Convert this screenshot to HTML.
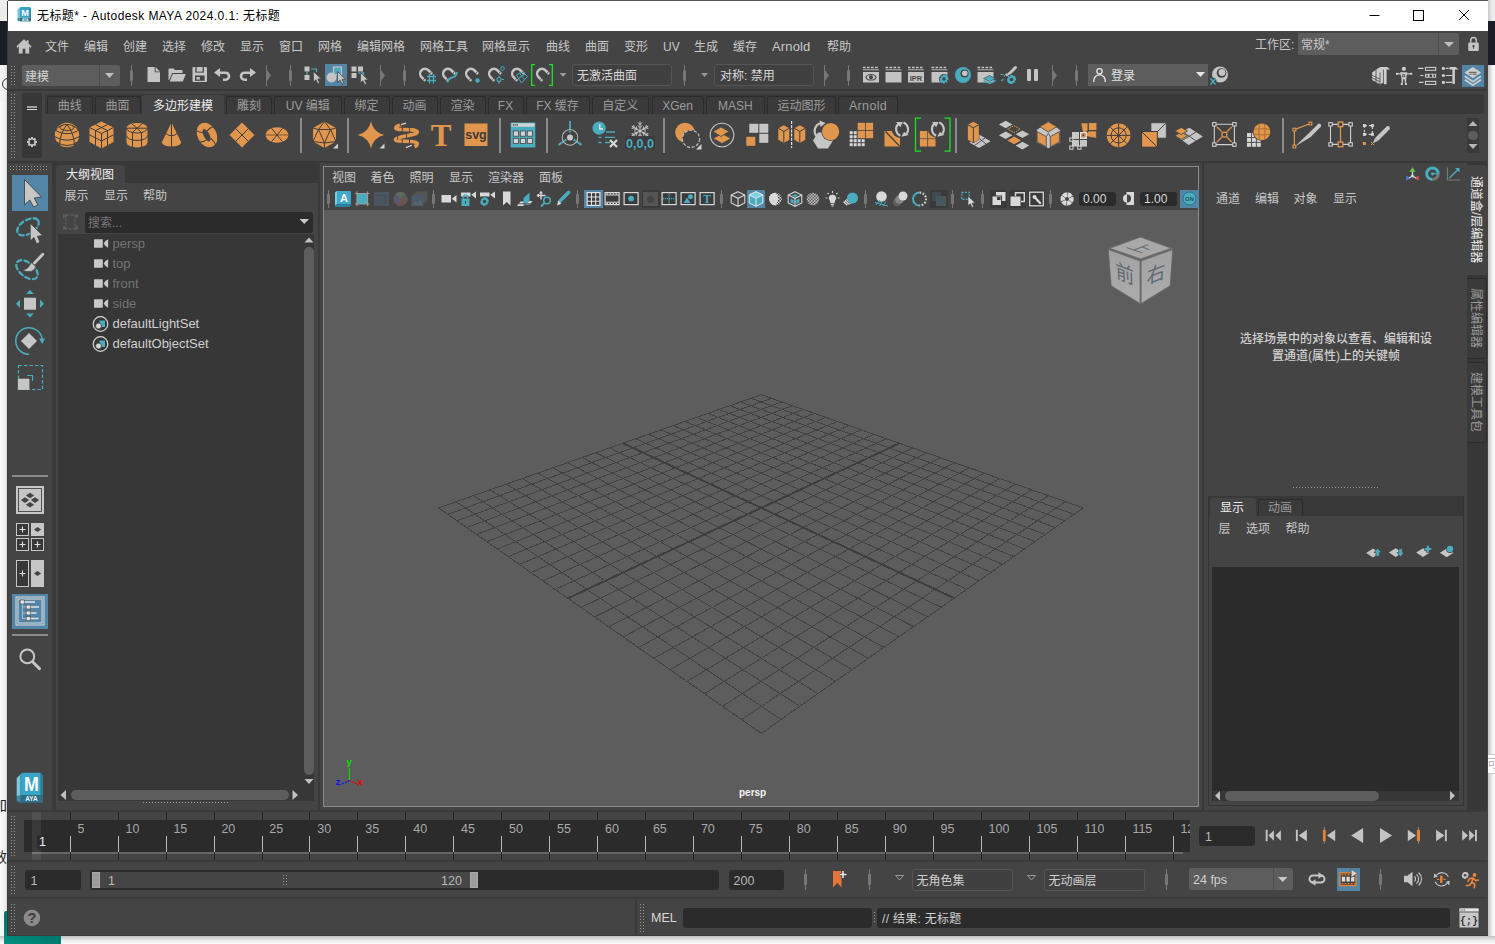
<!DOCTYPE html>
<html lang="zh-CN"><head><meta charset="utf-8"><title>Maya</title>
<style>
*{box-sizing:border-box;margin:0;padding:0}
html,body{width:1495px;height:944px;overflow:hidden;background:#fff}
body{position:relative;font-family:"Liberation Sans","Noto Sans CJK SC",sans-serif;font-size:12px;color:#c8c8c8;line-height:1}
.a{position:absolute}
.t{position:absolute;white-space:nowrap;line-height:16px;height:16px}
.win{position:absolute;left:8px;top:1px;width:1480px;height:935px;background:#444}
.dots{position:absolute;background-image:radial-gradient(circle,#7a7a7a 0.6px,transparent 0.9px);background-size:3px 3px}
.dk{background:#2b2b2b}
.md{background:#373737}
.cb{position:absolute;background:#5d5d5d;border-radius:2px}
.fld{position:absolute;background:#2b2b2b;border-radius:2px}
svg{position:absolute;overflow:visible}
.tab{position:absolute;border:1px solid #2b2b2b;border-bottom:none;border-radius:3px 3px 0 0;background:#3a3a3a;color:#9c9c9c;text-align:center;line-height:19px;height:18px;top:96px;font-size:12px}
.tab.on{background:#444;border-color:#444;color:#eee;top:95px;height:19px;line-height:21px}
</style></head><body>

<svg width="0" height="0" style="left:0;top:0"><defs><pattern id="dp" width="3" height="3" patternUnits="userSpaceOnUse"><rect width="1" height="1" fill="#969696"/></pattern><pattern id="dp2" width="2.5" height="3" patternUnits="userSpaceOnUse"><rect width="1" height="1" fill="#808080"/></pattern></defs></svg>
<div class="a" style="left:0px;top:0px;width:8px;height:21px;background:#ececec;"></div><div class="a" style="left:0px;top:21px;width:8px;height:43.5px;background:#1c1e27;"></div><div class="a" style="left:0px;top:64.5px;width:8px;height:37.5px;background:linear-gradient(90deg,#f4f4f4 0,#f0f0f0 55%,#d4d4d4 100%);"></div><div class="a" style="left:0px;top:102px;width:8px;height:842px;background:linear-gradient(90deg,#fafafa 0,#f2f2f2 50%,#d6d6d6 100%);"></div><div class="a" style="left:1.500px;top:78px;width:12px;height:12px;border:1px solid #333;border-radius:50%"></div><div class="a" style="left:1488px;top:0px;width:7px;height:21px;background:linear-gradient(90deg,#c8c8c8 0,#ececec 60%);"></div><div class="a" style="left:1488px;top:21px;width:7px;height:43.5px;background:#1c1e27;"></div><div class="a" style="left:1488px;top:64.5px;width:7px;height:880px;background:linear-gradient(90deg,#c4c4c4 0,#f6f6f6 70%,#fafafa 100%);"></div><div class="a" style="left:0px;top:936px;width:1495px;height:8px;background:linear-gradient(180deg,#c2c2c2 0,#eee 60%,#fafafa 100%);"></div><div class="a" style="left:4px;top:911px;width:57px;height:33px;background:linear-gradient(20deg,#009080 0,#007a6c 45%);border-radius:2px 0 0 0"></div><div class="a" style="left:8px;top:0px;width:1480px;height:1px;background:#555;"></div><div class="a" style="left:7px;top:1px;width:1px;height:935px;background:#3a3a3a;"></div><div class="a" style="left:1487px;top:1px;width:1px;height:935px;background:#3a3a3a;"></div><div class="a" style="left:0;top:797px;width:7px;height:18px;overflow:hidden"><div class="t" style="left:-7px;top:0;color:#222;font-size:14px">加</div></div><div class="a" style="left:0;top:849px;width:7px;height:18px;overflow:hidden"><div class="t" style="left:-7px;top:0;color:#222;font-size:14px">效</div></div><div class="a" style="left:1488px;top:754px;width:7px;height:20px;overflow:hidden;background:#fff;border-top:1px solid #c8c8c8;border-bottom:1px solid #c8c8c8"><div class="t" style="left:-1px;top:1px;color:#b4b4b4;font-size:12px">可</div></div>
<div class="win">
<div class="a" style="left:-8px;top:-1px;width:1495px;height:944px">
<div class="a" style="left:8px;top:1px;width:1480px;height:30px;background:#fff;"></div><svg style="left:16px;top:6px" width="16" height="16" ><g transform="translate(0.5 0.5) scale(0.9688 0.9688) translate(-0.0 -0.0)"><path d="M1 3.2L3 1.5v11.3L1 12z" fill="#7cc7dc"/><path d="M3 1.5l1-.9h9.6l1.2 1.2v9.9H3z" fill="#37a5c5"/><path d="M13.6.6l1.2 1.2v13.6l-1.2-1z" fill="#2a7f9c"/><path d="M3 11.7h11.8v3.7H3z" fill="#2d6f88"/><path d="M1 12l2-.3v3.7l-2-1z" fill="#3c8aa5"/><text x="8.9" y="9.6" font-family="Liberation Sans,sans-serif" font-weight="bold" font-size="9.5" fill="#fff" text-anchor="middle">M</text><text x="8.9" y="14.7" font-family="Liberation Sans,sans-serif" font-weight="bold" font-size="3.4" fill="#e8f4f8" text-anchor="middle">AYA</text></g></svg><div class="t" style="left:37px;top:8.0px;color:#000;font-size:12px;letter-spacing:0.42px">无标题* - Autodesk MAYA 2024.0.1: 无标题</div><svg style="left:1360px;top:1px" width="128" height="30" viewBox="0 0 128 30" fill="none" stroke="#000" stroke-width="1"><path d="M9.5 14.5h10"/><rect x="53.5" y="9.5" width="10" height="10"/><path d="M99 9l10 10M109 9l-10 10"/></svg>
<svg style="left:16px;top:38px" width="16" height="16" ><g transform="translate(0 0.8) scale(1.0667 1.0571) translate(-0.0 -0.0)"><path d="M7.5 0.5L0.3 7.3l1.1 1.2L2.6 7.4V14h3.6V9.3h2.6V14h3.6V7.4l1.2 1.1 1.1-1.2L11.8 4.600V1.3H9.9v1.5z" fill="#c4c4c4"/></g></svg><div class="t" style="left:45px;top:39.3px;font-size:12px">文件</div><div class="t" style="left:84px;top:39.3px;font-size:12px">编辑</div><div class="t" style="left:123px;top:39.3px;font-size:12px">创建</div><div class="t" style="left:162px;top:39.3px;font-size:12px">选择</div><div class="t" style="left:201px;top:39.3px;font-size:12px">修改</div><div class="t" style="left:240px;top:39.3px;font-size:12px">显示</div><div class="t" style="left:279px;top:39.3px;font-size:12px">窗口</div><div class="t" style="left:318px;top:39.3px;font-size:12px">网格</div><div class="t" style="left:357px;top:39.3px;font-size:12px">编辑网格</div><div class="t" style="left:420px;top:39.3px;font-size:12px">网格工具</div><div class="t" style="left:482px;top:39.3px;font-size:12px">网格显示</div><div class="t" style="left:546px;top:39.3px;font-size:12px">曲线</div><div class="t" style="left:585px;top:39.3px;font-size:12px">曲面</div><div class="t" style="left:624px;top:39.3px;font-size:12px">变形</div><div class="t" style="left:663px;top:39.3px;font-size:12px">UV</div><div class="t" style="left:694px;top:39.3px;font-size:12px">生成</div><div class="t" style="left:733px;top:39.3px;font-size:12px">缓存</div><div class="t" style="left:772px;top:39.3px;font-size:12px;font-size:13px;letter-spacing:0.15px">Arnold</div><div class="t" style="left:827px;top:39.3px;font-size:12px">帮助</div><div class="t" style="left:1255px;top:37.3px;font-size:12px">工作区:</div><div class="cb" style="left:1298px;top:33px;width:161px;height:21.500px"></div><div class="a" style="left:1438px;top:33px;width:1px;height:21.5px;background:#4e4e4e;"></div><div class="t" style="left:1301px;top:37.3px;font-size:12px">常规*</div><svg style="left:1444px;top:42px" width="10" height="5" ><path d="M0 0h10l-5.0 5z" fill="#c0c0c0"/></svg><svg style="left:1467px;top:36px" width="13" height="16" ><g transform="translate(0.5 0) scale(0.9231 0.9412) translate(-0.0 -0.0)"><path d="M3.5 7V4.6a3 3 0 0 1 6 0V7" fill="none" stroke="#c4c4c4" stroke-width="1.6"/><rect x="0.8" y="7" width="11.4" height="9" rx="1" fill="#c4c4c4"/><circle cx="6.5" cy="10.8" r="1.2" fill="#444"/><rect x="6" y="11" width="1" height="2.6" fill="#444"/></g></svg>
<svg style="left:11px;top:66px" width="6" height="21"><rect width="6" height="21" fill="url(#dp)"/></svg><div class="cb" style="left:22px;top:65px;width:98px;height:21px"></div><div class="a" style="left:99px;top:65px;width:1px;height:21px;background:#4e4e4e;"></div><div class="t" style="left:25px;top:69.3px;font-size:12px;color:#d0d0d0">建模</div><svg style="left:105px;top:73px" width="9" height="5" ><path d="M0 0h9l-4.5 5z" fill="#c0c0c0"/></svg><div class="a" style="left:131.0px;top:65px;width:1px;height:21px;background:#777;"></div><div class="a" style="left:130.0px;top:70px;width:3px;height:11px;background:#777;border-radius:1px"></div><svg style="left:147px;top:67px" width="13" height="15" ><path d="M0.5 0h7.2v5.3H13V15H0.5z" fill="#c4c4c4"/><path d="M8.6 0l4.4 4.4H8.6z" fill="#c4c4c4"/></svg><svg style="left:168px;top:67px" width="18" height="15" ><path d="M0.5 13V2.5q0-1 1-1h4l1.5 1.6h6.5q1 0 1 1V6H4.2L1.2 13z" fill="#c4c4c4"/><path d="M4.8 7h13l-3 7.5H1.6z" fill="#c4c4c4"/></svg><svg style="left:192px;top:67px" width="15" height="15" ><path d="M1.5 0H14q1 0 1 1v13q0 1-1 1H1.500Q0.500 15 0.500 14V1q0-1 1-1z" fill="#c4c4c4"/><rect x="3.3" y="0" width="8.6" height="5.600" fill="#444"/><rect x="4.600" y="0" width="6" height="4.600" fill="#c4c4c4"/><rect x="3" y="8.500" width="9.600" height="5.300" fill="#444"/><rect x="4.500" y="10" width="3.300" height="2.600" fill="#c4c4c4"/></svg><svg style="left:214px;top:68px" width="18" height="13" ><path d="M6 0L0 4.500l6 4.500V6h5.500a2.200 2.200 0 0 1 0 4.400H9v2.600h2.500a4.800 4.800 0 0 0 0-9.600H6z" fill="#c4c4c4"/></svg><svg style="left:238px;top:68px" width="18" height="13" ><path d="M12 0l6 4.500-6 4.500V6H6.500a2.200 2.200 0 0 0 0 4.400H9v2.600H6.500a4.800 4.800 0 0 1 0-9.600H12z" fill="#c4c4c4"/></svg><div class="a" style="left:266.0px;top:65px;width:1px;height:21px;background:#777;"></div><svg style="left:267px;top:70px" width="4" height="11" ><path d="M0 0v11l4 -5.5z" fill="#777"/></svg><div class="a" style="left:290.0px;top:65px;width:1px;height:21px;background:#777;"></div><div class="a" style="left:289.0px;top:70px;width:3px;height:11px;background:#777;border-radius:1px"></div><svg style="left:304px;top:66px" width="18" height="19" ><rect x="0.500" y="0.500" width="5" height="5" fill="#c4c4c4"/><rect x="0.500" y="9" width="5" height="5" fill="#c4c4c4"/><path d="M3 5.500v3.500M7 3h5.500v3" fill="none" stroke="#4aacbf" stroke-width="1.200"/><path transform="translate(9.5 5.5) scale(0.9)" d="M0 0v11.500l2.800-2.300 1.900 4.300 2-0.900-1.900-4.200 3.700-0.300z" fill="#c4c4c4" stroke="#444" stroke-width="0.800"/></svg><div class="a" style="left:325px;top:64px;width:22px;height:22px;background:#5285a6;"></div><svg style="left:326px;top:66px" width="20" height="19" ><rect x="7.500" y="1" width="8" height="8" fill="#4aacbf" stroke="#c4c4c4" stroke-width="1.200"/><circle cx="5.500" cy="11.500" r="5" fill="#c4c4c4"/><path transform="translate(11.5 5.5) scale(0.95)" d="M0 0v11.500l2.800-2.300 1.900 4.300 2-0.900-1.900-4.200 3.700-0.300z" fill="#c4c4c4" stroke="#444" stroke-width="0.800"/></svg><svg style="left:351px;top:66px" width="18" height="19" ><rect x="0.500" y="0.500" width="5" height="5" fill="#c4c4c4"/><rect x="7" y="0.500" width="5" height="5" fill="#c4c4c4"/><rect x="0.500" y="7" width="5" height="5" fill="#c4c4c4"/><path d="M7.500 7h5v4" fill="none" stroke="#4aacbf" stroke-width="1.400"/><path transform="translate(9.5 6.5) scale(0.9)" d="M0 0v11.500l2.800-2.300 1.900 4.300 2-0.900-1.900-4.200 3.700-0.300z" fill="#c4c4c4" stroke="#444" stroke-width="0.800"/></svg><div class="a" style="left:380.0px;top:65px;width:1px;height:21px;background:#777;"></div><svg style="left:381px;top:70px" width="4" height="11" ><path d="M0 0v11l4 -5.5z" fill="#777"/></svg><div class="a" style="left:404.0px;top:65px;width:1px;height:21px;background:#777;"></div><div class="a" style="left:403.0px;top:70px;width:3px;height:11px;background:#777;border-radius:1px"></div><svg style="left:418px;top:66px" width="19" height="19" ><g transform="translate(0.300 0.500) rotate(-45 7 7.500)"><path d="M2.200 12.300V7a4.800 4.800 0 0 1 9.600 0v5.300" fill="none" stroke="#c4c4c4" stroke-width="2.500"/><path d="M1.100 10.300h2.800M10.100 10.300h2.800" stroke="#444" stroke-width="0.800"/></g><path d="M9 10.500h9M9 14.500h9M11.500 8v9.500M15.500 8v9.500" stroke="#4aacbf" stroke-width="1.300" fill="none"/></svg><svg style="left:441px;top:66px" width="19" height="19" ><g transform="translate(0.300 0.500) rotate(-45 7 7.500)"><path d="M2.200 12.300V7a4.800 4.800 0 0 1 9.600 0v5.300" fill="none" stroke="#c4c4c4" stroke-width="2.500"/><path d="M1.100 10.300h2.800M10.100 10.300h2.800" stroke="#444" stroke-width="0.800"/></g><path d="M6.500 16.500q0.500-4 5-5 4-1 4.500-5.500" stroke="#4aacbf" stroke-width="1.800" fill="none"/></svg><svg style="left:464px;top:66px" width="19" height="19" ><g transform="translate(0.300 0.500) rotate(-45 7 7.500)"><path d="M2.200 12.300V7a4.800 4.800 0 0 1 9.600 0v5.300" fill="none" stroke="#c4c4c4" stroke-width="2.500"/><path d="M1.100 10.300h2.800M10.100 10.300h2.800" stroke="#444" stroke-width="0.800"/></g><circle cx="13.500" cy="14.500" r="2.200" fill="#4aacbf"/></svg><svg style="left:487px;top:66px" width="19" height="19" ><g transform="translate(0.300 0.500) rotate(-45 7 7.500)"><path d="M2.200 12.300V7a4.800 4.800 0 0 1 9.600 0v5.300" fill="none" stroke="#c4c4c4" stroke-width="2.500"/><path d="M1.100 10.300h2.800M10.100 10.300h2.800" stroke="#444" stroke-width="0.800"/></g><circle cx="15.500" cy="2.500" r="1.800" fill="none" stroke="#4aacbf" stroke-width="1"/><circle cx="12" cy="13.500" r="2" fill="none" stroke="#4aacbf" stroke-width="1.100"/><path d="M12 9.500v2M12 15.500v2.500M14.500 13.500h2.500" stroke="#4aacbf" stroke-width="1"/></svg><svg style="left:510px;top:66px" width="19" height="19" ><g transform="translate(0.300 0.500) rotate(-45 7 7.500)"><path d="M2.200 12.300V7a4.800 4.800 0 0 1 9.600 0v5.300" fill="none" stroke="#c4c4c4" stroke-width="2.500"/><path d="M1.100 10.300h2.800M10.100 10.300h2.800" stroke="#444" stroke-width="0.800"/></g><path d="M6.500 9l6-3.500 5 5-6 6.500z M9.500 7.300l5 6.200 M8.800 12l6.200-3.700" fill="none" stroke="#4aacbf" stroke-width="1"/></svg><svg style="left:531px;top:64px" width="22" height="22" ><g transform="translate(4 2)"><g transform="translate(0.300 0.500) rotate(-45 7 7.500)"><path d="M2.200 12.300V7a4.800 4.800 0 0 1 9.600 0v5.300" fill="none" stroke="#c4c4c4" stroke-width="2.500"/><path d="M1.100 10.300h2.800M10.100 10.300h2.800" stroke="#444" stroke-width="0.800"/></g></g><path d="M4 0.650H0.650v20.700H4M18 0.650h3.350v20.700H18" fill="none" stroke="#1fe01f" stroke-width="1.300"/></svg><svg style="left:559px;top:73px" width="8" height="4" ><g transform="translate(0.5 0)"><path d="M0 0h7l-3.5 4z" fill="#999"/></g></svg><div class="a" style="left:572px;top:64px;width:100px;height:22px;background:#404040;border:1px solid #555;border-radius:3px"></div><div class="t" style="left:577px;top:68.3px;font-size:12px;color:#d8d8d8">无激活曲面</div><div class="a" style="left:684.0px;top:65px;width:1px;height:21px;background:#777;"></div><div class="a" style="left:683.0px;top:70px;width:3px;height:11px;background:#777;border-radius:1px"></div><svg style="left:701px;top:73px" width="7" height="4" ><path d="M0 0h7l-3.5 4z" fill="#999"/></svg><div class="a" style="left:714px;top:64px;width:100px;height:22px;background:#404040;border:1px solid #555;border-radius:3px"></div><div class="t" style="left:720px;top:68.3px;font-size:12px;color:#d8d8d8">对称: 禁用</div><div class="a" style="left:824.0px;top:65px;width:1px;height:21px;background:#777;"></div><svg style="left:825px;top:70px" width="4" height="11" ><path d="M0 0v11l4 -5.5z" fill="#777"/></svg><div class="a" style="left:848.0px;top:65px;width:1px;height:21px;background:#777;"></div><div class="a" style="left:847.0px;top:70px;width:3px;height:11px;background:#777;border-radius:1px"></div><svg style="left:863px;top:67px" width="18" height="17" ><path d="M0 0.500h16" stroke="#c4c4c4" stroke-width="1.600" stroke-dasharray="2.600 1.400"/><path d="M0 2.800h16" stroke="#c4c4c4" stroke-width="0.900"/><rect x="0" y="5" width="16" height="10.500" fill="#c4c4c4"/><ellipse cx="8" cy="10.300" rx="5.500" ry="3.300" fill="#444"/><ellipse cx="8" cy="10.300" rx="4.300" ry="2.300" fill="#c4c4c4"/><circle cx="8" cy="10.300" r="2" fill="#444"/></svg><svg style="left:885px;top:67px" width="19" height="17" ><g transform="translate(0.5 0)"><path d="M0 0.500h16" stroke="#c4c4c4" stroke-width="1.600" stroke-dasharray="2.600 1.400"/><path d="M0 2.800h16" stroke="#c4c4c4" stroke-width="0.900"/><rect x="0" y="5" width="16" height="10.500" fill="#c4c4c4"/></g></svg><svg style="left:908px;top:67px" width="18" height="17" ><path d="M0 0.500h16" stroke="#c4c4c4" stroke-width="1.600" stroke-dasharray="2.600 1.400"/><path d="M0 2.800h16" stroke="#c4c4c4" stroke-width="0.900"/><rect x="0" y="5" width="16" height="10.500" fill="#c4c4c4"/><text x="8" y="13.500" font-family="Liberation Sans,sans-serif" font-size="7.500" font-weight="bold" fill="#444" text-anchor="middle">IPR</text></svg><svg style="left:931px;top:67px" width="19" height="17" ><g transform="translate(0.5 0)"><path d="M0 0.500h16" stroke="#c4c4c4" stroke-width="1.600" stroke-dasharray="2.600 1.400"/><path d="M0 2.800h16" stroke="#c4c4c4" stroke-width="0.900"/><rect x="0" y="5" width="16" height="10.500" fill="#c4c4c4"/><circle cx="12.5" cy="12" r="5.10" fill="#444"/><rect x="11.60" y="7.70" width="1.800" height="8.60" fill="#4aacbf" transform="rotate(0.0 12.5 12)"/><rect x="11.60" y="7.70" width="1.800" height="8.60" fill="#4aacbf" transform="rotate(22.5 12.5 12)"/><rect x="11.60" y="7.70" width="1.800" height="8.60" fill="#4aacbf" transform="rotate(45.0 12.5 12)"/><rect x="11.60" y="7.70" width="1.800" height="8.60" fill="#4aacbf" transform="rotate(67.5 12.5 12)"/><rect x="11.60" y="7.70" width="1.800" height="8.60" fill="#4aacbf" transform="rotate(0.0 12.5 12)"/><rect x="11.60" y="7.70" width="1.800" height="8.60" fill="#4aacbf" transform="rotate(45.0 12.5 12)"/><rect x="11.60" y="7.70" width="1.800" height="8.60" fill="#4aacbf" transform="rotate(90.0 12.5 12)"/><rect x="11.60" y="7.70" width="1.800" height="8.60" fill="#4aacbf" transform="rotate(135.0 12.5 12)"/><circle cx="12.5" cy="12" r="3.18" fill="#4aacbf"/><circle cx="12.5" cy="12" r="1.72" fill="#444"/></g></svg><svg style="left:955px;top:67px" width="18" height="17" ><circle cx="8" cy="8" r="8" fill="#4aacbf"/><circle cx="9.500" cy="6.500" r="4" fill="#444"/><circle cx="9.800" cy="6.200" r="2.800" fill="#c4c4c4"/></svg><svg style="left:977px;top:67px" width="19" height="17" ><g transform="translate(0.5 0)"><path d="M0 0.500h16" stroke="#c4c4c4" stroke-width="1.600" stroke-dasharray="2.600 1.400"/><path d="M0 2.800h16" stroke="#c4c4c4" stroke-width="0.900"/><rect x="0" y="5" width="16" height="10.500" fill="#c4c4c4"/><path d="M6 11.500l6-3 6 3-6 3z" fill="#4aacbf" stroke="#444" stroke-width="0.600"/><path d="M6 13.500l6 3 6-3" fill="none" stroke="#4aacbf" stroke-width="1.400"/></g></svg><svg style="left:1000px;top:67px" width="18" height="18" ><path d="M15.500 0.500L9 7" stroke="#c4c4c4" stroke-width="3" stroke-linecap="round"/><path d="M6.500 6l4 4-1.500 1.500-4-4z" fill="#c4c4c4"/><path d="M0.500 7.500h3M1.500 14l2-2M5 8.500l-1 1" stroke="#4aacbf" stroke-width="1.200"/><circle cx="11.5" cy="12.5" r="5.30" fill="#444"/><rect x="10.60" y="8.00" width="1.800" height="9.00" fill="#4aacbf" transform="rotate(0.0 11.5 12.5)"/><rect x="10.60" y="8.00" width="1.800" height="9.00" fill="#4aacbf" transform="rotate(22.5 11.5 12.5)"/><rect x="10.60" y="8.00" width="1.800" height="9.00" fill="#4aacbf" transform="rotate(45.0 11.5 12.5)"/><rect x="10.60" y="8.00" width="1.800" height="9.00" fill="#4aacbf" transform="rotate(67.5 11.5 12.5)"/><rect x="10.60" y="8.00" width="1.800" height="9.00" fill="#4aacbf" transform="rotate(0.0 11.5 12.5)"/><rect x="10.60" y="8.00" width="1.800" height="9.00" fill="#4aacbf" transform="rotate(45.0 11.5 12.5)"/><rect x="10.60" y="8.00" width="1.800" height="9.00" fill="#4aacbf" transform="rotate(90.0 11.5 12.5)"/><rect x="10.60" y="8.00" width="1.800" height="9.00" fill="#4aacbf" transform="rotate(135.0 11.5 12.5)"/><circle cx="11.5" cy="12.5" r="3.33" fill="#4aacbf"/><circle cx="11.5" cy="12.5" r="1.80" fill="#444"/></svg><div class="a" style="left:1027px;top:68.5px;width:4px;height:12.5px;background:#c4c4c4;border-radius:1px"></div><div class="a" style="left:1034px;top:68.5px;width:4px;height:12.5px;background:#c4c4c4;border-radius:1px"></div><div class="a" style="left:1052.0px;top:65px;width:1px;height:21px;background:#777;"></div><svg style="left:1053px;top:70px" width="4" height="11" ><path d="M0 0v11l4 -5.5z" fill="#777"/></svg><div class="a" style="left:1076.0px;top:65px;width:1px;height:21px;background:#777;"></div><div class="a" style="left:1075.0px;top:70px;width:3px;height:11px;background:#777;border-radius:1px"></div><div class="a" style="left:1088px;top:64px;width:120px;height:22px;background:#5d5d5d;"></div><svg style="left:1093px;top:68px" width="13" height="14" ><circle cx="6.500" cy="3.300" r="2.700" fill="none" stroke="#e8e8e8" stroke-width="1.300"/><path d="M0.800 14v-1.500a5.700 5.700 0 0 1 11.400 0V14" fill="none" stroke="#e8e8e8" stroke-width="1.300"/></svg><div class="t" style="left:1111px;top:68.3px;font-size:12px;color:#e4e4e4">登录</div><svg style="left:1196px;top:72px" width="9" height="5" ><path d="M0 0h9l-4.5 5z" fill="#e8e8e8"/></svg><svg style="left:1210px;top:66px" width="18" height="19" ><circle cx="10" cy="8.500" r="8" fill="#c4c4c4"/><circle cx="11.500" cy="7" r="4.800" fill="#444"/><circle cx="12" cy="6.500" r="3.400" fill="#c4c4c4"/><circle cx="2.500" cy="15.500" r="4" fill="#444"/><path d="M0.500 12.500l5 6M5.500 12.500l-5 6" stroke="#4aacbf" stroke-width="1.500"/></svg><svg style="left:0;top:0" width="1495" height="100" viewBox="0 0 1495 100"><path d="M1380 67.100L1383.800 69V82.500L1380 84.300 1372.100 80.100V72.500z" fill="#cdcdcd"/><path d="M1372.100 75.200L1380 79.200M1372.100 77.800L1380 81.800M1376 70V82.200M1380 72.500V84.300" stroke="#444" stroke-width="0.800" fill="none"/><path d="M1380.900 67.100H1387.200L1390.100 69.600H1380.900z" fill="#cdcdcd"/><rect x="1383.800" y="69" width="2.800" height="15.200" fill="#cdcdcd"/><path d="M1383.400 69.600V84.300" stroke="#444" stroke-width="0.700"/><circle cx="1403.900" cy="68.800" r="2.100" fill="#cdcdcd"/><path d="M1396.200 73.800H1411.800" stroke="#cdcdcd" stroke-width="1.200"/><rect x="1396" y="72.800" width="2" height="2" fill="#cdcdcd"/><rect x="1410.200" y="72.800" width="2" height="2" fill="#cdcdcd"/><path d="M1400.100 72.300H1407.300L1406.100 79.300H1401.700z" fill="#cdcdcd"/><rect x="1402.200" y="74.300" width="3" height="2.900" fill="#444"/><rect x="1403" y="75.100" width="1.400" height="1.300" fill="#cdcdcd"/><rect x="1401.600" y="79" width="1.500" height="3.800" fill="#cdcdcd"/><rect x="1404.700" y="79" width="1.500" height="3.800" fill="#cdcdcd"/><rect x="1400.800" y="83" width="2" height="2" fill="#cdcdcd"/><rect x="1404.900" y="83" width="2" height="2" fill="#cdcdcd"/><path d="M1418.100 68.400H1423.500M1420.200 75.500H1423.500M1418.900 82.400H1423.500" stroke="#cdcdcd" stroke-width="1.100"/><rect x="1425.500" y="67.400" width="10.200" height="2.900" fill="none" stroke="#cdcdcd" stroke-width="1.100"/><rect x="1425.500" y="81.400" width="10.200" height="3" fill="none" stroke="#cdcdcd" stroke-width="1.100"/><rect x="1425" y="73.800" width="11.100" height="3.900" fill="#cdcdcd"/><circle cx="1430.800" cy="75.750" r="1.500" fill="#444"/><rect x="1426.300" y="74.600" width="1.400" height="2.300" fill="#444"/><rect x="1433.600" y="74.600" width="1.400" height="2.300" fill="#444"/><circle cx="1443.400" cy="68.4" r="1.600" fill="#cdcdcd"/><circle cx="1443.400" cy="75.5" r="1.600" fill="#cdcdcd"/><circle cx="1443.400" cy="82.4" r="1.600" fill="#cdcdcd"/><path d="M1445.700 68.400H1448.600M1445.700 75.500H1452.400M1445.700 82.400H1452.400" stroke="#cdcdcd" stroke-width="1.100"/><path d="M1449.400 67.100H1455.700L1458.600 69.600H1449.400z" fill="#cdcdcd"/><rect x="1452.400" y="69" width="2.500" height="14.900" fill="#cdcdcd"/><rect x="1462" y="65" width="22.100" height="21.900" fill="#5285a6"/><path d="M1472.900 67L1481.300 72.600 1472.900 78.200 1464.500 72.600z" fill="#cdcdcd"/><path d="M1468.800 72.300H1476.600M1469.500 74.200H1471.600M1472.600 74.200H1476.600" stroke="#444" stroke-width="0.900"/><path d="M1464.800 76.300L1472.900 81.700 1481 76.300M1464.800 79.800L1472.900 85.200 1481 79.800" fill="none" stroke="#cdcdcd" stroke-width="1.700"/></svg><div class="a" style="left:8px;top:89px;width:1479px;height:2px;background:#383838;"></div>
<svg style="left:11px;top:94px" width="6" height="66"><rect width="6" height="66" fill="url(#dp)"/></svg><div class="a" style="left:22px;top:93px;width:20px;height:65px;background:#373737;"></div><div class="a" style="left:27px;top:106px;width:10px;height:2.3px;background:#a0a0a0;"></div><div class="a" style="left:27px;top:108.8px;width:10px;height:1.2px;background:#d8d8d8;"></div><svg style="left:27px;top:137px" width="10" height="10" ><rect x="4" y="0" width="2" height="10" fill="#c8c8c8" transform="rotate(0 5 5)"/><rect x="4" y="0" width="2" height="10" fill="#c8c8c8" transform="rotate(45 5 5)"/><rect x="4" y="0" width="2" height="10" fill="#c8c8c8" transform="rotate(90 5 5)"/><rect x="4" y="0" width="2" height="10" fill="#c8c8c8" transform="rotate(135 5 5)"/><circle cx="5" cy="5" r="3.800" fill="#c8c8c8"/><circle cx="5" cy="5" r="2.400" fill="#373737"/></svg><div class="a" style="left:45px;top:94px;width:1439px;height:20px;background:#393939;"></div><div class="tab" style="left:47px;width:45.5px">曲线</div><div class="tab" style="left:94.5px;width:46px">曲面</div><div class="tab on" style="left:142px;width:82px">多边形建模</div><div class="tab" style="left:226px;width:46px">雕刻</div><div class="tab" style="left:274px;width:67.5px">UV 编辑</div><div class="tab" style="left:343.5px;width:46px">绑定</div><div class="tab" style="left:391.5px;width:46px">动画</div><div class="tab" style="left:439.5px;width:46px">渲染</div><div class="tab" style="left:487.5px;width:36px">FX</div><div class="tab" style="left:525.5px;width:64px">FX 缓存</div><div class="tab" style="left:591.5px;width:57.5px">自定义</div><div class="tab" style="left:651.5px;width:52px">XGen</div><div class="tab" style="left:706px;width:58.5px">MASH</div><div class="tab" style="left:767px;width:69px">运动图形</div><div class="tab" style="left:838px;width:60px;font-size:12.500px;letter-spacing:0.350px">Arnold</div><svg style="left:51px;top:119px" width="32" height="32" ><circle cx="16" cy="16" r="12.200" fill="#e0964c"/><g fill="none" stroke="#3c3c3c" stroke-width="1"><ellipse cx="16" cy="8.500" rx="7" ry="3"/><path d="M4.500 11.500Q16 18 27.500 11.500M3.600 17.500Q16 25 28.400 17.500M5.500 23Q16 30 26.500 23"/><path d="M16 5.500Q9 14 8.500 26M16 5.500Q23 14 23.500 26M11 6.500Q6 8 4.500 11.500M21 6.500Q26 8 27.500 11.500"/></g></svg><svg style="left:85px;top:119px" width="33" height="32" ><g transform="translate(0.5 0)"><path d="M16 2.500L28 8.500V23L16 29.500 4 23V8.500z" fill="#e0964c"/><g fill="none" stroke="#3c3c3c" stroke-width="1"><path d="M4 8.500L16 14.500 28 8.500M16 14.500V29.500M10 5.500L22 11.500M22 5.500L10 11.500M4 15.800L16 22 28 15.800M10 11.500V26.200M22 11.500V26.200"/></g></g></svg><svg style="left:121px;top:119px" width="32" height="32" ><path d="M5.500 9a10.500 5 0 0 1 21 0V23.500a10.500 5 0 0 1-21 0z" fill="#e0964c"/><g fill="none" stroke="#3c3c3c" stroke-width="1"><path d="M5.500 9a10.500 5 0 0 0 21 0M5.500 16.500a10.500 5 0 0 0 21 0M5.500 9.200H26.500M11 5L16 9.200 21 5M16 9.200L11.500 13.600V28M16 9.200L20.500 13.600V28"/></g></svg><svg style="left:155px;top:119px" width="33" height="32" ><g transform="translate(0.5 0)"><path d="M16 3.500L25.800 23.500a10 5 0 0 1-19.600 0z" fill="#e0964c"/><g fill="none" stroke="#3c3c3c" stroke-width="1"><path d="M16 3V28.500M10.500 14.500Q16 19 21.500 14.500"/></g></g></svg><svg style="left:191px;top:119px" width="32" height="32" ><g transform="rotate(-28 16 16)"><ellipse cx="16" cy="16" rx="9.500" ry="12.800" fill="#e0964c"/><ellipse cx="15.500" cy="16" rx="2.900" ry="6.800" fill="#444"/><g fill="none" stroke="#3c3c3c" stroke-width="1"><path d="M13.500 12Q10 9.500 8.500 7M17.800 12.500Q22 11 25 11.500M13.200 20Q9.500 20.500 6.800 19M17.700 20.500Q19.500 25 19 28.500"/></g></g></svg><svg style="left:226px;top:119px" width="32" height="32" ><path d="M16 3.500L28.500 16 16 28.500 3.500 16z" fill="#e0964c"/><path d="M9.800 9.800L22.200 22.200M22.200 9.800L9.800 22.200" stroke="#3c3c3c" stroke-width="1" fill="none"/></svg><svg style="left:261px;top:119px" width="32" height="32" ><ellipse cx="16" cy="16" rx="11.300" ry="7.700" fill="#e0964c"/><path d="M5 16H27" stroke="#a66f38" stroke-width="1.600"/><path d="M10.500 9.300L21.500 22.700M21.500 9.300L10.500 22.700" stroke="#3c3c3c" stroke-width="1" fill="none"/></svg><div class="a" style="left:300px;top:118px;width:2px;height:35px;background:#8a8a8a;"></div><svg style="left:308px;top:119px" width="33" height="32" ><g transform="translate(0.5 0)"><path d="M16 2.500L27.500 9V22.500L16 29 4.500 22.500V9z" fill="#e0964c"/><g fill="none" stroke="#3c3c3c" stroke-width="1"><path d="M16 2.500L10 10.500H22zM10 10.500L4.500 9M22 10.500L27.500 9M10 10.500L16 24 22 10.500M10 10.500L4.500 22.500 16 24 27.500 22.500 22 10.500M16 24V29"/></g><path d="M29.5 24.5V29.5H24.5z" fill="#cfcfcf"/></g></svg><div class="a" style="left:347px;top:118px;width:2px;height:35px;background:#8a8a8a;"></div><svg style="left:355px;top:119px" width="32" height="32" ><path d="M16 2.500Q18.500 13.500 29.200 16 18.500 18.500 16 29.500 13.500 18.500 2.800 16 13.500 13.500 16 2.500z" fill="#e0964c"/><path d="M29.5 24.5V29.5H24.5z" fill="#cfcfcf"/></svg><svg style="left:390px;top:119px" width="32" height="32" ><path d="M11 6Q5.800 6.800 5.800 9.200Q5.800 10.500 12 10.500L21 10.900Q27.600 11.400 27.200 13.200Q26.800 14.800 21 15.900L11 18Q5.300 19.200 5.500 20.800Q5.600 22.100 12 22.100L21 22.500Q27.600 23 27.200 25Q26.800 26.500 24.600 27.800" fill="none" stroke="#e0964c" stroke-width="3.700" stroke-linejoin="round"/><path d="M11.100 5.650L16.100 4.200M15.900 28.600L22 26.200" stroke="#d8d8d8" stroke-width="1.200"/><g stroke="#3c3c3c" stroke-width="0.900"><path d="M12.300 8.300v4.200M19.500 8.600v4.300M16.500 14.700v4.200M7.700 16.600v4.200M12.300 20v4.200M19.500 20.200v4.400M22.800 24.800v4M10.300 3.800v3.600"/></g></svg><svg style="left:425px;top:119px" width="32" height="32" ><text x="16" y="26.500" font-family="Liberation Serif,serif" font-size="31" font-weight="bold" fill="#e0964c" text-anchor="middle">T</text></svg><svg style="left:460px;top:119px" width="32" height="32" ><rect x="4.500" y="4.500" width="23" height="22.500" fill="#e0964c"/><text x="16" y="19.500" font-family="Liberation Sans,sans-serif" font-weight="bold" font-size="12.500" fill="#3a3a3a" text-anchor="middle">svg</text></svg><div class="a" style="left:499px;top:118px;width:2px;height:35px;background:#8a8a8a;"></div><svg style="left:507px;top:119px" width="32" height="32" ><rect x="3.700" y="3.500" width="24.600" height="25" fill="#4aacbf"/><rect x="4.500" y="4.300" width="23" height="3.400" fill="#d4d4d4"/><rect x="5.8" y="5.200" width="1.200" height="1.500" fill="#444"/><rect x="7.699999999999999" y="5.200" width="1.200" height="1.500" fill="#444"/><rect x="9.6" y="5.200" width="1.200" height="1.500" fill="#444"/><rect x="6.3" y="12.0" width="5.200" height="5.200" fill="#d4d4d4" stroke="#444" stroke-width="0.800"/><rect x="13.3" y="12.0" width="5.200" height="5.200" fill="#d4d4d4" stroke="#444" stroke-width="0.800"/><rect x="20.3" y="12.0" width="5.200" height="5.200" fill="#d4d4d4" stroke="#444" stroke-width="0.800"/><rect x="6.3" y="19.3" width="5.200" height="5.200" fill="#d4d4d4" stroke="#444" stroke-width="0.800"/><rect x="13.3" y="19.3" width="5.200" height="5.200" fill="#d4d4d4" stroke="#444" stroke-width="0.800"/><rect x="20.3" y="19.3" width="5.200" height="5.200" fill="#d4d4d4" stroke="#444" stroke-width="0.800"/></svg><div class="a" style="left:546px;top:118px;width:2px;height:35px;background:#8a8a8a;"></div><svg style="left:554px;top:119px" width="32" height="32" ><path d="M16 2v11.500" stroke="#4aacbf" stroke-width="1.800"/><path d="M12.500 20.500L4.500 25.800M19.500 20.500L27.500 25.800" stroke="#4aacbf" stroke-width="2"/><circle cx="16" cy="18.400" r="7.700" fill="#444" fill-opacity="0" stroke="#c6c6c6" stroke-width="1.100"/><circle cx="16" cy="18.400" r="7" fill="none" stroke="#444" stroke-width="0.600"/><circle cx="16" cy="18.400" r="3" fill="#c6c6c6"/></svg><svg style="left:589px;top:119px" width="33" height="32" ><g transform="translate(0.5 0)"><circle cx="9.600" cy="9.200" r="6.600" fill="#4aacbf"/><path d="M10.300 5v5h3.200" fill="none" stroke="#e8e8e8" stroke-width="1.300"/><path d="M16.500 13h9M9 18.300h3M15.500 18.300h10M9 23.500h3M15.500 23.500h5" stroke="#4aacbf" stroke-width="1.300"/><path d="M20.500 21l7 7M27.500 21l-7 7" stroke="#d8d8d8" stroke-width="2.200"/></g></svg><svg style="left:624px;top:119px" width="32" height="32" ><g transform="rotate(0 16 12)"><path d="M16 12V2.500M16 5.500l-2-2M16 5.500l2-2M16 8.500l-2.200-2M16 8.500l2.200-2" stroke="#c6c6c6" stroke-width="1" fill="none"/></g><g transform="rotate(60 16 12)"><path d="M16 12V2.500M16 5.500l-2-2M16 5.500l2-2M16 8.500l-2.200-2M16 8.500l2.200-2" stroke="#c6c6c6" stroke-width="1" fill="none"/></g><g transform="rotate(120 16 12)"><path d="M16 12V2.500M16 5.500l-2-2M16 5.500l2-2M16 8.500l-2.200-2M16 8.500l2.200-2" stroke="#c6c6c6" stroke-width="1" fill="none"/></g><g transform="rotate(180 16 12)"><path d="M16 12V2.500M16 5.500l-2-2M16 5.500l2-2M16 8.500l-2.200-2M16 8.500l2.200-2" stroke="#c6c6c6" stroke-width="1" fill="none"/></g><g transform="rotate(240 16 12)"><path d="M16 12V2.500M16 5.500l-2-2M16 5.500l2-2M16 8.500l-2.200-2M16 8.500l2.200-2" stroke="#c6c6c6" stroke-width="1" fill="none"/></g><g transform="rotate(300 16 12)"><path d="M16 12V2.500M16 5.500l-2-2M16 5.500l2-2M16 8.500l-2.200-2M16 8.500l2.200-2" stroke="#c6c6c6" stroke-width="1" fill="none"/></g><rect x="1" y="17.200" width="30" height="13" fill="#3b3b3b"/><text x="16" y="28.600" font-family="Liberation Sans,sans-serif" font-weight="bold" font-size="12.500" fill="#4aacbf" text-anchor="middle">0,0,0</text></svg><div class="a" style="left:663px;top:118px;width:2px;height:35px;background:#8a8a8a;"></div><svg style="left:672px;top:119px" width="32" height="32" ><circle cx="13" cy="13.500" r="9.800" fill="#e0964c"/><circle cx="19" cy="19.800" r="9" fill="#444"/><circle cx="19" cy="19.800" r="8.600" fill="none" stroke="#c6c6c6" stroke-width="1.100" stroke-dasharray="3.200 1.600"/><path d="M29.5 25V30.5H24z" fill="#cfcfcf"/></svg><svg style="left:706px;top:119px" width="32" height="32" ><circle cx="16" cy="16" r="11.800" fill="none" stroke="#c6c6c6" stroke-width="1.100"/><path d="M16 14.500L7 19.500 16 24.500 25 19.500z" fill="#e0964c" stroke="#444" stroke-width="0.800"/><path d="M15 8L7 12.500 15 17.500 23 12.500z" fill="#e0964c" stroke="#444" stroke-width="0.800"/></svg><svg style="left:741px;top:119px" width="33" height="32" ><g transform="translate(0.5 0)"><rect x="7.800" y="4.800" width="9" height="9" fill="#c6c6c6"/><rect x="17.800" y="4.800" width="9" height="9" fill="#c6c6c6"/><rect x="17.800" y="14.800" width="9" height="9" fill="#c6c6c6"/><rect x="4.800" y="17.800" width="9" height="9" fill="#e0964c"/></g></svg><svg style="left:776px;top:119px" width="32" height="32" ><path d="M7.8 6.2l5.5 3.1v11.5l-5.5 3.1l-5.5 -3.1v-11.5z" fill="#e0964c"/><path d="M2.3 9.3l5.5 3.1l5.5 -3.1M7.8 12.4v11.5" fill="none" stroke="#3c3c3c" stroke-width="1"/><path d="M23.8 6.2l5.5 3.1v11.5l-5.5 3.1l-5.5 -3.1v-11.5z" fill="#e0964c"/><path d="M18.3 9.3l5.5 3.1l5.5 -3.1M23.8 12.4v11.5" fill="none" stroke="#3c3c3c" stroke-width="1"/><path d="M15.600 2v27" stroke="#e0e0e0" stroke-width="1.200" stroke-dasharray="3 1.200"/></svg><svg style="left:810px;top:119px" width="32" height="32" ><path d="M8 13.500h10l5 8-5 8H8l-5-8z" fill="#c6c6c6"/><path d="M6.500 17A8 8 0 0 1 11.500 4" fill="none" stroke="#c6c6c6" stroke-width="2.200"/><path d="M9.500 1.500l6 2.500-5 4z" fill="#c6c6c6"/><circle cx="20.600" cy="12.600" r="9.300" fill="#444"/><circle cx="20.600" cy="12.600" r="8.600" fill="#e0964c"/></svg><svg style="left:845px;top:119px" width="33" height="32" ><g transform="translate(0.5 0)"><rect x="12.2" y="3.8" width="7.300" height="7.300" fill="#e0964c"/><rect x="20.299999999999997" y="3.8" width="7.300" height="7.300" fill="#e0964c"/><rect x="12.2" y="11.899999999999999" width="7.300" height="7.300" fill="#e0964c"/><rect x="20.299999999999997" y="11.899999999999999" width="7.300" height="7.300" fill="#e0964c"/><rect x="4.2" y="12.2" width="3" height="3" fill="#d6d6d6"/><rect x="8.2" y="12.2" width="3" height="3" fill="#d6d6d6"/><rect x="4.2" y="16.2" width="3" height="3" fill="#d6d6d6"/><rect x="8.2" y="16.2" width="3" height="3" fill="#d6d6d6"/><rect x="4.2" y="20.2" width="3" height="3" fill="#d6d6d6"/><rect x="8.2" y="20.2" width="3" height="3" fill="#d6d6d6"/><rect x="12.2" y="20.2" width="3" height="3" fill="#d6d6d6"/><rect x="16.2" y="20.2" width="3" height="3" fill="#d6d6d6"/><rect x="4.2" y="24.2" width="3" height="3" fill="#d6d6d6"/><rect x="8.2" y="24.2" width="3" height="3" fill="#d6d6d6"/><rect x="12.2" y="24.2" width="3" height="3" fill="#d6d6d6"/><rect x="16.2" y="24.2" width="3" height="3" fill="#d6d6d6"/></g></svg><svg style="left:881px;top:119px" width="32" height="32" ><rect x="3.500" y="12" width="15.500" height="15.500" fill="#e0964c"/><path d="M4.500 12.500L18.500 27" stroke="#3c3c3c" stroke-width="1.200"/><circle cx="19.500" cy="10" r="9" fill="#444"/><g transform="translate(12.5 2.5) scale(1.05)" fill="none" stroke="#c6c6c6" stroke-width="2"><path d="M6.500 13.500A6.800 6.800 0 0 1 5 2"/><path d="M9.500 1A6.800 6.800 0 0 1 11.500 12.500"/></g><g transform="translate(12.5 2.5) scale(1.05)" fill="#c6c6c6"><path d="M2.500 0.500h6.500l-2.500 5z"/><path d="M7.500 14.500l2.500-4.500 4.500 2.800z"/></g></svg><svg style="left:916px;top:119px" width="33" height="32" ><g transform="translate(0.5 0)"><rect x="3.4" y="12.0" width="7.400" height="7.400" fill="#e0964c"/><rect x="11.6" y="12.0" width="7.400" height="7.400" fill="#e0964c"/><rect x="3.4" y="20.1" width="7.400" height="7.400" fill="#e0964c"/><rect x="11.6" y="20.1" width="7.400" height="7.400" fill="#e0964c"/><circle cx="19.800" cy="10" r="8.500" fill="#444"/><g transform="translate(12.8 2.5) scale(1.05)" fill="none" stroke="#c6c6c6" stroke-width="2"><path d="M6.500 13.500A6.800 6.800 0 0 1 5 2"/><path d="M9.500 1A6.800 6.800 0 0 1 11.500 12.500"/></g><g transform="translate(12.8 2.5) scale(1.05)" fill="#c6c6c6"><path d="M2.500 0.500h6.500l-2.500 5z"/><path d="M7.500 14.500l2.500-4.500 4.500 2.800z"/></g><path d="M4.500 -0.800H-1v33h5.500M28 -0.800h5.500v33H28" fill="none" stroke="#1fe01f" stroke-width="1.300"/></g></svg><div class="a" style="left:955px;top:118px;width:2px;height:35px;background:#8a8a8a;"></div><svg style="left:963px;top:119px" width="32" height="32" ><path d="M16 15.500L27.600 22.300 16 29.100 6.500 23.500z" fill="#c6c6c6"/><path d="M11.500 26.500L22 19M16.500 19.500L23 25" stroke="#444" stroke-width="0.900"/><path d="M10.350 2.300l6 3v15.500l-6 3.500-6-3.500V5.300z" fill="#444"/><path d="M10.35 2.8l5.5 3.0v15l-5.5 3.0l-5.5 -3.0v-15z" fill="#e0964c"/><path d="M4.85 5.8l5.5 3.0l5.5 -3.0M10.35 8.8v15" fill="none" stroke="#3c3c3c" stroke-width="1"/></svg><svg style="left:998px;top:119px" width="32" height="32" ><path d="M7.65 1.7000000000000002L14.45 5.5 7.65 9.3 0.8500000000000005 5.5z" fill="#c6c6c6" /><path d="M7.65 12.5L14.45 16.3 7.65 20.1 0.8500000000000005 16.3z" fill="#c6c6c6" /><path d="M24.4 11.5L31.2 15.3 24.4 19.1 17.599999999999998 15.3z" fill="#c6c6c6" /><path d="M24.4 22.8L31.2 26.6 24.4 30.400000000000002 17.599999999999998 26.6z" fill="#c6c6c6" /><path d="M16.2 17.599999999999998L23.0 21.4 16.2 25.2 9.399999999999999 21.4z" fill="#e0964c" /><path d="M16 6.700L22.200 10.200 16 13.700 9.800 10.200z" fill="none" stroke="#e0964c" stroke-width="1" stroke-dasharray="1.600 1"/></svg><svg style="left:1033px;top:119px" width="32" height="32" ><path d="M15.300 2.300L27.300 10.800V23.500L15.300 29.600 3.500 23.500V10.800z" fill="#c6c6c6" stroke="#444" stroke-width="0.800"/><path d="M15.300 2.800L23.800 7.700 15.300 13 6.800 7.700z" fill="#e0964c" stroke="#444" stroke-width="0.800"/><path d="M4.200 12.600L13.300 17.600V27.800L4.200 23z" fill="#e0964c" stroke="#444" stroke-width="0.800"/><path d="M26.400 12.600L17.300 17.600V27.800L26.400 23z" fill="#e0964c" stroke="#444" stroke-width="0.800"/><path d="M13.300 17.600L15.300 14.300 17.300 17.600" fill="none" stroke="#444" stroke-width="0.800"/></svg><svg style="left:1067px;top:119px" width="32" height="32" ><rect x="5" y="13" width="7" height="7" fill="#c6c6c6"/><rect x="13" y="13" width="7" height="7" fill="#c6c6c6"/><rect x="5" y="21" width="7" height="6.600" fill="#c6c6c6"/><rect x="13" y="21" width="7" height="6.600" fill="#c6c6c6"/><path d="M13.900 4H20.900V11.500L17.400 14.500 15.900 14.300z" fill="#e0964c" stroke="#444" stroke-width="0.600"/><rect x="21.900" y="4" width="7.500" height="7" fill="#e0964c"/><path d="M21.900 12H29.400V19.200L19.400 17.500 19.400 14.500z" fill="#e0964c" stroke="#444" stroke-width="0.600"/><rect x="13.500" y="13.500" width="6" height="6" fill="none" stroke="#e4e4e4" stroke-width="0.900"/><rect x="14.90" y="14.90" width="3" height="3" fill="#444" stroke="#e0964c" stroke-width="1.1"/><rect x="2.80" y="19.00" width="3.2" height="3.2" fill="#444" stroke="#d8d8d8" stroke-width="1"/><rect x="2.80" y="27.00" width="3.2" height="3.2" fill="#444" stroke="#d8d8d8" stroke-width="1"/><rect x="10.80" y="27.00" width="3.2" height="3.2" fill="#444" stroke="#d8d8d8" stroke-width="1"/></svg><svg style="left:1103px;top:119px" width="32" height="32" ><circle cx="15.600" cy="16.400" r="11.800" fill="#e0964c"/><g fill="none" stroke="#3c3c3c" stroke-width="1"><circle cx="15.600" cy="16.400" r="7.600"/><path d="M15.600 4.500v24M3.700 16.400h24M7.300 8.100l16.600 16.600M23.900 8.100L7.300 24.700"/></g></svg><svg style="left:1138px;top:119px" width="32" height="32" ><rect x="12.950" y="3.800" width="15.300" height="15.300" fill="#c6c6c6" stroke="#444" stroke-width="0.800"/><path d="M28 4L13.200 18.900" stroke="#444" stroke-width="1"/><rect x="3.600" y="12.500" width="15.800" height="15.700" fill="#e0964c" stroke="#3a3a3a" stroke-width="1"/><path d="M4 13L19 27.800" stroke="#3a3a3a" stroke-width="1"/></svg><svg style="left:1173px;top:119px" width="32" height="32" ><path d="M16.300 8.800L29.800 17.400 15.800 26.100 2.200 16.600z" fill="#c6c6c6"/><path d="M9 21.500L23 13M9.300 12.500L22.800 21.700" stroke="#444" stroke-width="0.900"/><path d="M8.2 13.200000000000001L14.5 16.8 8.2 20.400000000000002 1.8999999999999995 16.8z" fill="#e0964c" stroke="#444" stroke-width="0.8" /><path d="M8.2 8.4L14.5 12 8.2 15.6 1.8999999999999995 12z" fill="#e0964c" stroke="#444" stroke-width="0.8" /></svg><svg style="left:1208px;top:119px" width="33" height="32" ><g transform="translate(0.5 0)"><path d="M5.800 5.300H25.900V25.600H5.800z" fill="none" stroke="#d0d0d0" stroke-width="1.100"/><path d="M8.500 8L13 12.500M23.200 8L18.700 12.500M8.500 23L13 18.500M23.200 23L18.700 18.500" stroke="#e0964c" stroke-width="1.200"/><rect x="4.10" y="3.60" width="3.4" height="3.4" fill="#444" stroke="#d8d8d8" stroke-width="1"/><rect x="24.20" y="3.60" width="3.4" height="3.4" fill="#444" stroke="#d8d8d8" stroke-width="1"/><rect x="4.10" y="23.90" width="3.4" height="3.4" fill="#444" stroke="#d8d8d8" stroke-width="1"/><rect x="24.20" y="23.90" width="3.4" height="3.4" fill="#444" stroke="#d8d8d8" stroke-width="1"/><rect x="13.60" y="13.30" width="4.6" height="4.6" fill="#444" stroke="#e0964c" stroke-width="1.3"/></g></svg><svg style="left:1243px;top:119px" width="32" height="32" ><rect x="4.00" y="14.00" width="4" height="4" fill="#d4d4d4"/><rect x="8.90" y="14.00" width="4" height="4" fill="#d4d4d4"/><rect x="13.80" y="14.00" width="4" height="4" fill="#d4d4d4"/><rect x="4.00" y="18.90" width="4" height="4" fill="#d4d4d4"/><rect x="8.90" y="18.90" width="4" height="4" fill="#d4d4d4"/><rect x="13.80" y="18.90" width="4" height="4" fill="#d4d4d4"/><rect x="4.00" y="23.80" width="4" height="4" fill="#d4d4d4"/><rect x="8.90" y="23.80" width="4" height="4" fill="#d4d4d4"/><rect x="13.80" y="23.80" width="4" height="4" fill="#d4d4d4"/><circle cx="18.900" cy="12.800" r="9.200" fill="#444"/><circle cx="18.900" cy="12.800" r="8.400" fill="#e0964c"/><g fill="none" stroke="#b06f30" stroke-width="1"><path d="M16.300 4.800Q15.300 12.800 16.300 20.800M21.500 4.800Q22.500 12.800 21.500 20.800M10.900 10.200Q18.900 9.200 26.900 10.200M10.900 15.400Q18.900 16.400 26.900 15.400"/></g></svg><div class="a" style="left:1282px;top:118px;width:2px;height:35px;background:#8a8a8a;"></div><svg style="left:1290px;top:119px" width="33" height="32" ><g transform="translate(0.5 0)"><path d="M3.900 10.600L19.950 4.500M3.900 10.600V27.500" stroke="#e0964c" stroke-width="1.200" fill="none"/><path d="M28.700 6.700L20 15.300" stroke="#c6c6c6" stroke-width="4" stroke-linecap="round"/><path d="M18 14.500L21 17.500 4.500 27.500z" fill="#c6c6c6"/><rect x="2.50" y="9.20" width="2.8" height="2.8" fill="#444" stroke="#e0964c" stroke-width="1.1"/><rect x="18.55" y="3.10" width="2.8" height="2.8" fill="#444" stroke="#e0964c" stroke-width="1.1"/><rect x="2.50" y="26.10" width="2.8" height="2.8" fill="#444" stroke="#e0964c" stroke-width="1.1"/></g></svg><svg style="left:1325px;top:119px" width="32" height="32" ><path d="M5.500 5.350H25.600V25.400H5.500z" fill="none" stroke="#d0d0d0" stroke-width="1.100"/><path d="M15.500 5.350V25.400" stroke="#e0964c" stroke-width="1.300"/><rect x="3.80" y="3.65" width="3.4" height="3.4" fill="#444" stroke="#d8d8d8" stroke-width="1"/><rect x="23.90" y="3.65" width="3.4" height="3.4" fill="#444" stroke="#d8d8d8" stroke-width="1"/><rect x="3.80" y="23.70" width="3.4" height="3.4" fill="#444" stroke="#d8d8d8" stroke-width="1"/><rect x="23.90" y="23.70" width="3.4" height="3.4" fill="#444" stroke="#d8d8d8" stroke-width="1"/><rect x="13.20" y="3.05" width="4.6" height="4.6" fill="#444" stroke="#e0964c" stroke-width="1.3"/><rect x="13.20" y="23.10" width="4.6" height="4.6" fill="#444" stroke="#e0964c" stroke-width="1.3"/></svg><svg style="left:1360px;top:119px" width="32" height="32" ><path d="M4.400 6.600H12.400V15.400H4.400z" fill="none" stroke="#d0d0d0" stroke-width="1.100" stroke-dasharray="2.500 2"/><rect x="2.900" y="5.100" width="3" height="3" fill="#d0d0d0"/><rect x="10.900" y="5.100" width="3" height="3" fill="#d0d0d0"/><rect x="2.900" y="13.900" width="3" height="3" fill="#d0d0d0"/><rect x="10.900" y="13.900" width="3" height="3" fill="#d0d0d0"/><rect x="2.900" y="23" width="3" height="3" fill="#e0964c"/><path d="M11 23l3 3M14 23l-3 3" stroke="#e0964c" stroke-width="1"/><path d="M27 10L16.500 20.500" stroke="#c6c6c6" stroke-width="4" stroke-linecap="butt"/><circle cx="27.800" cy="9.200" r="2.100" fill="#c6c6c6"/><path d="M15 19l3 3-5 2z" fill="#c6c6c6"/></svg><div class="a" style="left:1467px;top:118px;width:12px;height:35px;background:#3a3a3a;"></div><svg style="left:1468px;top:121px" width="10" height="5" ><g transform="translate(0.5 0)"><path d="M0 5h9l-4.5 -5z" fill="#b8b8b8"/></g></svg><svg style="left:1468px;top:144px" width="10" height="5" ><g transform="translate(0.5 0)"><path d="M0 0h9l-4.5 5z" fill="#b8b8b8"/></g></svg><div class="a" style="left:1468px;top:131px;width:10px;height:9px;background:#5d5d5d;border-radius:4.5px"></div><div class="a" style="left:8px;top:161px;width:1479px;height:2px;background:#383838;"></div>
<svg style="left:10px;top:166px" width="39" height="6"><rect width="39" height="6" fill="url(#dp)"/></svg><div class="a" style="left:12px;top:175px;width:36px;height:36px;background:#5285a6;"></div><svg style="left:0;top:0" width="60" height="300" viewBox="0 0 60 300"><path d="M24.500 179.500V204.800L29.800 200 33.500 207 37.800 205 34.300 198 41.500 197z" fill="#c6c6c6" stroke="#444" stroke-width="0.900"/></svg><svg style="left:0;top:0" width="60" height="300" viewBox="0 0 60 300"><ellipse cx="28" cy="226.800" rx="12" ry="6.800" transform="rotate(-32 28 226.800)" fill="none" stroke="#4aacbf" stroke-width="2.300" stroke-dasharray="4.500 3.300" stroke-linecap="round"/><path d="M30.200 223.300V241L34 237.500 36.500 243.800 40 242.300 37.500 236.300 42.700 235.500z" fill="#c6c6c6" stroke="#444" stroke-width="0.900"/></svg><svg style="left:0;top:0" width="60" height="300" viewBox="0 0 60 300"><ellipse cx="27" cy="269.700" rx="12.500" ry="7" transform="rotate(38 27 269.700)" fill="none" stroke="#4aacbf" stroke-width="2.300" stroke-dasharray="4.500 3.300" stroke-linecap="round"/><path d="M42.800 254.200L34.500 263" stroke="#c6c6c6" stroke-width="2.800" stroke-linecap="round"/><path d="M31.300 262.800L35.600 266.200Q34 274 22.800 270.400 29 268.500 31.300 262.800z" fill="#c6c6c6" stroke="#444" stroke-width="0.600"/></svg><svg style="left:0;top:0" width="60" height="400" viewBox="0 0 60 400"><rect x="24" y="297.700" width="12" height="12" fill="#c6c6c6"/><path d="M26 294L30 290 34 294zM26 313.500L30 317.500 34 313.500zM20 299.600V308L16 303.800zM40 299.600V308L44 303.800z" fill="#4aacbf"/></svg><svg style="left:0;top:0" width="60" height="400" viewBox="0 0 60 400"><path d="M29 354.300A13.300 13.300 0 1 1 42.200 339" fill="none" stroke="#4aacbf" stroke-width="1.500"/><path d="M39.200 338.500H45L42.200 344z" fill="#4aacbf"/><path d="M29 333L37 341 29 349 21 341z" fill="#c6c6c6"/></svg><svg style="left:0;top:0" width="60" height="400" viewBox="0 0 60 400"><rect x="18.500" y="365.500" width="24" height="24" fill="none" stroke="#4aacbf" stroke-width="1.200" stroke-dasharray="3.500 2"/><rect x="17.900" y="378.700" width="11.500" height="11.200" fill="#c6c6c6"/><path d="M27 375.500H32.500V381" fill="none" stroke="#4aacbf" stroke-width="1.200"/></svg><div class="a" style="left:12px;top:475px;width:36px;height:2px;background:#8a8a8a;"></div><svg style="left:15px;top:486px" width="30" height="28" ><g transform="translate(0.5 0)"><rect x="0.500" y="0" width="28" height="28" fill="#c6c6c6"/><rect x="3" y="2.500" width="23" height="23" fill="none" stroke="#444" stroke-width="0.900"/><path d="M14.5 6.7L18.6 9.5 14.5 12.3 10.4 9.5z" fill="#444"/><path d="M14.5 15.899999999999999L18.6 18.7 14.5 21.5 10.4 18.7z" fill="#444"/><path d="M9.5 11.3L13.6 14.1 9.5 16.9 5.4 14.1z" fill="#444"/><path d="M19.5 11.3L23.6 14.1 19.5 16.9 15.4 14.1z" fill="#444"/></g></svg><svg style="left:15px;top:523px" width="30" height="28" ><g transform="translate(0.5 0)"><rect x="1.0" y="0.5" width="12" height="12" fill="#383838" stroke="#c6c6c6" stroke-width="1"/><path d="M4.0 6.5H10.0M7.0 3.5V9.5" stroke="#e0e0e0" stroke-width="1.100"/><rect x="15.5" y="0" width="13" height="13" fill="#c6c6c6"/><path d="M22.0 4.1L25.6 6.5 22.0 8.9 18.4 6.5z" fill="#444"/><rect x="1.0" y="15.5" width="12" height="12" fill="#383838" stroke="#c6c6c6" stroke-width="1"/><path d="M4.0 21.5H10.0M7.0 18.5V24.5" stroke="#e0e0e0" stroke-width="1.100"/><rect x="16.0" y="15.5" width="12" height="12" fill="#383838" stroke="#c6c6c6" stroke-width="1"/><path d="M19.0 21.5H25.0M22.0 18.5V24.5" stroke="#e0e0e0" stroke-width="1.100"/></g></svg><svg style="left:15px;top:560px" width="30" height="28" ><g transform="translate(0.5 0)"><rect x="1.0" y="0.5" width="12" height="26" fill="#383838" stroke="#c6c6c6" stroke-width="1"/><path d="M4.0 13.5H10.0M7.0 10.5V16.5" stroke="#e0e0e0" stroke-width="1.100"/><rect x="15.5" y="0" width="13" height="27" fill="#c6c6c6"/><path d="M22.0 11.1L25.6 13.5 22.0 15.9 18.4 13.5z" fill="#444"/></g></svg><div class="a" style="left:12px;top:593.5px;width:36px;height:35px;background:#5285a6;"></div><svg style="left:15px;top:596px" width="30" height="30" ><g transform="translate(0.5 0.5)"><rect x="0.500" y="0.500" width="28" height="28" fill="none" stroke="#e0e0e0" stroke-width="1"/><rect x="2.500" y="2.500" width="24" height="24" fill="none" stroke="#e0e0e0" stroke-width="1"/><path d="M7 7V22.500M7 10.500H12M7 16.500H12M7 22H12" stroke="#a9c0cf" stroke-width="0.900" fill="none"/><path d="M7 5.500H19.500M13 10.500H23.500M13 16.500H21M13 22H23" stroke="#e6e6e6" stroke-width="1.500"/><rect x="4.7" y="3.5" width="4" height="4" fill="#e6e6e6" stroke="#444" stroke-width="0.600"/><rect x="10.7" y="8.5" width="4" height="4" fill="#e6e6e6" stroke="#444" stroke-width="0.600"/><rect x="10.7" y="14.5" width="4" height="4" fill="#e6e6e6" stroke="#444" stroke-width="0.600"/><rect x="10.7" y="20" width="4" height="4" fill="#e6e6e6" stroke="#444" stroke-width="0.600"/></g></svg><div class="a" style="left:12px;top:634px;width:36px;height:2px;background:#8a8a8a;"></div><svg style="left:19px;top:648px" width="23" height="23" ><circle cx="8.300" cy="8.400" r="6.900" fill="none" stroke="#c6c6c6" stroke-width="2"/><path d="M13.800 14L20.500 20.600" stroke="#c6c6c6" stroke-width="3" stroke-linecap="round"/></svg><svg style="left:14px;top:771px" width="31" height="34" ><g transform="translate(0.8 0.5) scale(1.8750 2.0344) translate(-0.0 -0.0)"><path d="M1 3.2L3 1.5v11.3L1 12z" fill="#7cc7dc"/><path d="M3 1.5l1-.9h9.6l1.2 1.2v9.9H3z" fill="#37a5c5"/><path d="M13.6.6l1.2 1.2v13.6l-1.2-1z" fill="#2a7f9c"/><path d="M3 11.7h11.8v3.7H3z" fill="#2d6f88"/><path d="M1 12l2-.3v3.7l-2-1z" fill="#3c8aa5"/><text x="8.9" y="9.6" font-family="Liberation Sans,sans-serif" font-weight="bold" font-size="9.5" fill="#fff" text-anchor="middle">M</text><text x="8.9" y="14.7" font-family="Liberation Sans,sans-serif" font-weight="bold" font-size="3.4" fill="#e8f4f8" text-anchor="middle">AYA</text></g></svg><div class="a" style="left:52px;top:163px;width:4px;height:648px;background:#3a3a3a;"></div>
<div class="a" style="left:52px;top:163px;width:268px;height:20px;background:#383838;"></div><div class="a" style="left:56px;top:165px;width:69px;height:19px;background:#444;border-radius:3px 3px 0 0"></div><div class="t" style="left:66px;top:167.0px;font-size:12px;color:#eee">大纲视图</div><div class="t" style="left:64.5px;top:188.3px;font-size:12px">展示</div><div class="t" style="left:104px;top:188.3px;font-size:12px">显示</div><div class="t" style="left:143px;top:188.3px;font-size:12px">帮助</div><svg style="left:63px;top:214px" width="15" height="16" ><path d="M0 0L4.500 2.300 0 4.600zM15 0L10.500 2.300 15 4.600zM0 11.400L4.500 13.700 0 16zM15 11.400L10.500 13.700 15 16z" fill="#5c5c5c"/><rect x="2.800" y="1" width="9.400" height="14" fill="none" stroke="#5c5c5c" stroke-width="1.300" stroke-dasharray="3 1.500"/></svg><div class="fld" style="left:85px;top:212px;width:228px;height:20.600px;border-radius:3px"></div><div class="t" style="left:88px;top:215.3px;font-size:12px;color:#777">搜索...</div><svg style="left:299px;top:219px" width="10" height="5" ><g transform="translate(0.5 0)"><path d="M0 0h9.5l-4.75 5z" fill="#c8c8c8"/></g></svg><div class="a" style="left:58px;top:234px;width:256px;height:567px;background:#373737;"></div><svg style="left:94px;top:239px" width="15" height="10" ><g transform="translate(0 0.2)"><rect x="0" y="0" width="8.800" height="8.500" rx="0.600" fill="#c8c8c8"/><path d="M9.700 4.250Q11 1.500 14.100 0V8.500Q11 7 9.700 4.250z" fill="#c8c8c8"/></g></svg><div class="t" style="left:112.5px;top:236.2px;font-size:13px;color:#747474">persp</div><svg style="left:94px;top:259px" width="15" height="10" ><g transform="translate(0 0.2)"><rect x="0" y="0" width="8.800" height="8.500" rx="0.600" fill="#c8c8c8"/><path d="M9.700 4.250Q11 1.500 14.100 0V8.500Q11 7 9.700 4.250z" fill="#c8c8c8"/></g></svg><div class="t" style="left:112.5px;top:256.2px;font-size:13px;color:#747474">top</div><svg style="left:94px;top:279px" width="15" height="10" ><g transform="translate(0 0.2)"><rect x="0" y="0" width="8.800" height="8.500" rx="0.600" fill="#c8c8c8"/><path d="M9.700 4.250Q11 1.500 14.100 0V8.500Q11 7 9.700 4.250z" fill="#c8c8c8"/></g></svg><div class="t" style="left:112.5px;top:276.2px;font-size:13px;color:#747474">front</div><svg style="left:94px;top:299px" width="15" height="10" ><g transform="translate(0 0.2)"><rect x="0" y="0" width="8.800" height="8.500" rx="0.600" fill="#c8c8c8"/><path d="M9.700 4.250Q11 1.500 14.100 0V8.500Q11 7 9.700 4.250z" fill="#c8c8c8"/></g></svg><div class="t" style="left:112.5px;top:296.2px;font-size:13px;color:#747474">side</div><svg style="left:92px;top:316px" width="17" height="16" ><g transform="translate(0.5 0)"><circle cx="8" cy="8" r="7.300" fill="none" stroke="#d8d8d8" stroke-width="1.200"/><rect x="7" y="4.500" width="5.500" height="6.500" fill="#4aacbf"/><circle cx="6" cy="10" r="3" fill="#d8d8d8" stroke="#373737" stroke-width="0.800"/></g></svg><div class="t" style="left:112.5px;top:316.2px;font-size:13px;color:#d0d0d0">defaultLightSet</div><svg style="left:92px;top:336px" width="17" height="16" ><g transform="translate(0.5 0)"><circle cx="8" cy="8" r="7.300" fill="none" stroke="#d8d8d8" stroke-width="1.200"/><rect x="7" y="4.500" width="5.500" height="6.500" fill="#4aacbf"/><circle cx="6" cy="10" r="3" fill="#d8d8d8" stroke="#373737" stroke-width="0.800"/></g></svg><div class="t" style="left:112.5px;top:336.2px;font-size:13px;color:#d0d0d0">defaultObjectSet</div><svg style="left:304px;top:237px" width="10" height="6" ><g transform="translate(0.5 0.5)"><path d="M0 5h9l-4.5 -5z" fill="#c0c0c0"/></g></svg><svg style="left:304px;top:779px" width="10" height="5" ><g transform="translate(0.5 0)"><path d="M0 0h9l-4.5 5z" fill="#c0c0c0"/></g></svg><div class="a" style="left:304px;top:247px;width:10px;height:528px;background:#5d5d5d;border-radius:5px"></div><svg style="left:60px;top:790px" width="6" height="10" ><g transform="translate(0.5 0)"><path d="M5.5 0v10l-5.5 -5.0z" fill="#c0c0c0"/></g></svg><svg style="left:292px;top:790px" width="6" height="10" ><g transform="translate(0.5 0)"><path d="M0 0v10l5.5 -5.0z" fill="#c0c0c0"/></g></svg><div class="a" style="left:71px;top:790px;width:218px;height:10px;background:#5d5d5d;border-radius:5px"></div><svg style="left:143px;top:802px" width="87" height="3"><rect width="87" height="3" fill="url(#dp)"/></svg><div class="a" style="left:318px;top:163px;width:2px;height:648px;background:#3a3a3a;"></div>
<div class="a" style="left:323px;top:166px;width:876px;height:641px;border:1px solid #8a8a8a"></div><div class="t" style="left:332px;top:170.3px;font-size:12px">视图</div><div class="t" style="left:370.5px;top:170.3px;font-size:12px">着色</div><div class="t" style="left:409.5px;top:170.3px;font-size:12px">照明</div><div class="t" style="left:449px;top:170.3px;font-size:12px">显示</div><div class="t" style="left:488px;top:170.3px;font-size:12px">渲染器</div><div class="t" style="left:539px;top:170.3px;font-size:12px">面板</div><div class="a" style="left:328.0px;top:190px;width:1px;height:18px;background:#777;"></div><div class="a" style="left:327.0px;top:194px;width:3px;height:10px;background:#777;border-radius:1px"></div><svg style="left:335px;top:191px" width="16" height="16" ><path d="M0 1.500L2 0h13l1 1.500v13L14 16H1l-1-1.500z" fill="#3a9fc0"/><path d="M2 0h13l1 1.500v11H1z" fill="#3fa9cc"/><path d="M0 1.500L2 0v13l-2 1.500z" fill="#7fcbe0"/><path d="M0 14.500L2 13h14v1.500L14 16H1z" fill="#2b7f9c"/><text x="9" y="11" font-family="Liberation Sans,sans-serif" font-size="11" font-weight="bold" fill="#fff" text-anchor="middle">A</text></svg><svg style="left:354px;top:191px" width="17" height="16" ><g transform="translate(0.5 0)"><rect x="2.500" y="2.500" width="10.500" height="10.500" fill="#4aacbf"/><path d="M0.500 2.500H15M0.500 13H15M2.500 0.500V15M13 0.500V15" stroke="#9a9a9a" stroke-width="1.200"/></g></svg><svg style="left:374px;top:191px" width="16" height="16" ><rect x="0" y="1" width="15" height="14" fill="#4a5560"/><path d="M3 4.500h8.500V13" fill="none" stroke="#3c444c" stroke-width="1" stroke-dasharray="1.200 1"/></svg><svg style="left:393px;top:191px" width="16" height="16" ><circle cx="7.500" cy="8" r="7" fill="#5a5a5a"/><path d="M7.500 8L2.500 3A7 7 0 0 1 12.500 3z" fill="#5d6a5a"/><path d="M7.500 8L2.500 3A7 7 0 0 0 4 14z" fill="#5a5570"/><path d="M7.500 8L14.300 6.500A7 7 0 0 1 4 14z" fill="#6a5454"/></svg><svg style="left:411px;top:191px" width="17" height="16" ><rect x="4.500" y="0.500" width="12" height="10" fill="#4e5a4e"/><rect x="2.500" y="2.500" width="12" height="10" fill="#5a5060"/><rect x="0.500" y="4.500" width="12" height="10.500" fill="#4a5a66"/><path d="M1.500 13.500l3-3.500 2 2 2.500-4 2.500 5.500z" fill="#55666f"/></svg><div class="a" style="left:433.0px;top:190px;width:1px;height:18px;background:#777;"></div><div class="a" style="left:432.0px;top:194px;width:3px;height:10px;background:#777;border-radius:1px"></div><svg style="left:441px;top:191px" width="17" height="16" ><g transform="translate(0.5 0)"><rect x="0" y="4" width="9.500" height="7.500" fill="#d8d8d8"/><path d="M10.300 7.800L15 4V11.500z" fill="#d8d8d8"/></g></svg><svg style="left:460px;top:191px" width="16" height="16" ><path d="M1 1.500h9.500v4H1z" fill="#d8d8d8"/><path d="M11.300 3.800L16 0.500V7.500z" fill="#d8d8d8"/><path d="M3.300 7.500V6a2.200 2.200 0 0 1 4.400 0v1.500" fill="none" stroke="#4aacbf" stroke-width="1.300"/><rect x="1.500" y="7.500" width="8" height="7.500" fill="#4aacbf"/><rect x="5" y="10" width="1" height="2.500" fill="#444"/></svg><svg style="left:479px;top:191px" width="16" height="16" ><path d="M1 1.500h9.500v4H1z" fill="#d8d8d8"/><path d="M11.300 3.800L16 0.500V7.500z" fill="#d8d8d8"/><circle cx="5.5" cy="10.5" r="5.00" fill="#444"/><rect x="4.60" y="6.30" width="1.800" height="8.40" fill="#4aacbf" transform="rotate(0.0 5.5 10.5)"/><rect x="4.60" y="6.30" width="1.800" height="8.40" fill="#4aacbf" transform="rotate(22.5 5.5 10.5)"/><rect x="4.60" y="6.30" width="1.800" height="8.40" fill="#4aacbf" transform="rotate(45.0 5.5 10.5)"/><rect x="4.60" y="6.30" width="1.800" height="8.40" fill="#4aacbf" transform="rotate(67.5 5.5 10.5)"/><rect x="4.60" y="6.30" width="1.800" height="8.40" fill="#4aacbf" transform="rotate(0.0 5.5 10.5)"/><rect x="4.60" y="6.30" width="1.800" height="8.40" fill="#4aacbf" transform="rotate(45.0 5.5 10.5)"/><rect x="4.60" y="6.30" width="1.800" height="8.40" fill="#4aacbf" transform="rotate(90.0 5.5 10.5)"/><rect x="4.60" y="6.30" width="1.800" height="8.40" fill="#4aacbf" transform="rotate(135.0 5.5 10.5)"/><circle cx="5.5" cy="10.5" r="3.11" fill="#4aacbf"/><circle cx="5.5" cy="10.5" r="1.68" fill="#444"/></svg><svg style="left:503px;top:191px" width="8" height="16" ><path d="M0 0.500h7.500v14L3.750 11 0 14.500z" fill="#d8d8d8"/></svg><svg style="left:517px;top:191px" width="16" height="16" ><path d="M6.500 7L12.500 1.500V10L6.500 15z" fill="#4aacbf"/><path d="M0 15L3.500 10.500H6.500V15zM8.500 13.500L12.500 10H15.500L13 13.500z" fill="#d8d8d8"/><path d="M2 12.700H14" stroke="#444" stroke-width="0.800"/></svg><svg style="left:536px;top:191px" width="17" height="16" ><g transform="translate(0.5 0)"><path d="M4.500 0.500V8.500M0.500 4.500H9" stroke="#d8d8d8" stroke-width="1.400"/><path d="M4.500 0L6.500 2.500H2.500zM0 4.500L2.500 2.500V6.500z" fill="#d8d8d8"/><circle cx="10.500" cy="9.500" r="3.300" fill="none" stroke="#4aacbf" stroke-width="1.500"/><path d="M8 12L4.500 15.500" stroke="#4aacbf" stroke-width="1.800"/></g></svg><svg style="left:556px;top:191px" width="15" height="16" ><path d="M12.500 1.500L4 10" stroke="#4aacbf" stroke-width="3.600" stroke-linecap="round"/><path d="M2.200 9.500l3.200 3.200-4.400 1.800z" fill="#d8d8d8"/></svg><div class="a" style="left:577.0px;top:190px;width:1px;height:18px;background:#777;"></div><div class="a" style="left:576.0px;top:194px;width:3px;height:10px;background:#777;border-radius:1px"></div><div class="a" style="left:584px;top:189.5px;width:18.5px;height:18.5px;background:#5285a6;"></div><svg style="left:586px;top:191px" width="15" height="16" ><g transform="translate(0.5 0.5)"><rect x="0.600" y="1.100" width="12.800" height="12.800" fill="#3a3a3a" stroke="#e4e4e4" stroke-width="1.200"/><path d="M5 1V14M9.200 1V14M0.500 5.500H13.500M0.500 9.700H13.500" stroke="#e4e4e4" stroke-width="1.100"/></g></svg><svg style="left:604px;top:191px" width="17" height="16" ><g transform="translate(0.5 0)"><rect x="0.600" y="1.600" width="14" height="12" fill="#3a3a3a" stroke="#d8d8d8" stroke-width="1.200"/><path d="M1 4H14.500M1 11.200H14.500" stroke="#d8d8d8" stroke-width="1"/><path d="M2 2.800h11M2 12.400h11" stroke="#d8d8d8" stroke-width="1.200" stroke-dasharray="1.500 1.500"/></g></svg><svg style="left:623px;top:191px" width="17" height="16" ><g transform="translate(0.5 0)"><rect x="0.600" y="1.600" width="14" height="12" fill="#3a3a3a" stroke="#d8d8d8" stroke-width="1.200"/><circle cx="7.600" cy="7.600" r="2.900" fill="#4aacbf"/></g></svg><div class="a" style="left:641.5px;top:189.5px;width:18px;height:18.5px;background:#3a3a3a;"></div><div class="a" style="left:643px;top:192px;width:15px;height:14px;background:#555;"></div><svg style="left:643px;top:192px" width="16" height="16" ><circle cx="7.500" cy="7.500" r="3.500" fill="#444"/></svg><svg style="left:661px;top:191px" width="17" height="16" ><g transform="translate(0.5 0)"><rect x="0.600" y="1.600" width="14" height="12" fill="#3a3a3a" stroke="#d8d8d8" stroke-width="1.200"/><path d="M1.500 7.600H14M7.600 2.500V13" stroke="#4aacbf" stroke-width="1.300" stroke-dasharray="1.200 0.800"/></g></svg><svg style="left:680px;top:191px" width="17" height="16" ><g transform="translate(0.5 0)"><rect x="0.600" y="1.600" width="14" height="12" fill="#3a3a3a" stroke="#d8d8d8" stroke-width="1.200"/><circle cx="10" cy="5.800" r="2.500" fill="#4aacbf"/><path d="M3 12L6.500 6.500 10 12z" fill="#4aacbf"/></g></svg><svg style="left:699px;top:191px" width="17" height="16" ><g transform="translate(0.5 0)"><rect x="0.600" y="1.600" width="14" height="12" fill="#3a3a3a" stroke="#d8d8d8" stroke-width="1.200"/><text x="7.600" y="12" font-family="Liberation Serif,serif" font-weight="bold" font-size="11.500" fill="#4aacbf" text-anchor="middle">T</text></g></svg><div class="a" style="left:721.0px;top:190px;width:1px;height:18px;background:#777;"></div><div class="a" style="left:720.0px;top:194px;width:3px;height:10px;background:#777;border-radius:1px"></div><svg style="left:730px;top:191px" width="17" height="16" ><g transform="translate(0.5 0)"><path d="M7.500 0.700L14.300 4V12L7.500 15.300 0.700 12V4z" fill="none" stroke="#d8d8d8" stroke-width="1.100"/><path d="M0.700 4L7.500 7.300 14.300 4M7.500 7.300V15.300" fill="none" stroke="#d8d8d8" stroke-width="1.100"/><path d="M7.500 1V5M2 12L5 10M13 12L10 10" stroke="#888" stroke-width="0.700" stroke-dasharray="1.500 1"/></g></svg><div class="a" style="left:747px;top:189.5px;width:18px;height:18.5px;background:#5285a6;"></div><svg style="left:748px;top:191px" width="17" height="16" ><g transform="translate(0.5 0)"><path d="M7.500 0.700L14.300 4V12L7.500 15.300 0.700 12V4z" fill="#4aacbf" stroke="#e8e8e8" stroke-width="1"/><path d="M7.500 0.700L14.300 4 7.500 7.300 0.700 4z" fill="#79d3e3" stroke="#e8e8e8" stroke-width="1"/><path d="M7.500 7.300V15.300" stroke="#e8e8e8" stroke-width="1"/></g></svg><svg style="left:769px;top:191px" width="13" height="16" ><defs><pattern id="chk" width="3" height="3" patternUnits="userSpaceOnUse"><rect width="3" height="3" fill="#e8e8e8"/><rect width="1.500" height="1.500" fill="#333"/><rect x="1.500" y="1.500" width="1.500" height="1.500" fill="#333"/></pattern></defs><circle cx="6.500" cy="8" r="6.300" fill="url(#chk)"/><path d="M6.500 1.700A6.300 6.300 0 0 0 6.500 14.300A9 9 0 0 0 6.500 1.700z" fill="#d8d8d8"/><path d="M6.500 1.700A6.300 6.300 0 0 0 6.500 14.300z" fill="#d8d8d8"/></svg><svg style="left:787px;top:191px" width="16" height="16" ><g transform="translate(0.5 0)"><path d="M7.500 0.700L14.300 4V12L7.500 15.300 0.700 12V4z" fill="none" stroke="#d8d8d8" stroke-width="1.100"/><path d="M0.700 4L7.500 7.300 14.300 4M7.500 7.300V15.300" fill="none" stroke="#d8d8d8" stroke-width="1.100"/><path d="M7.500 3L10.500 4.500 7.500 6 4.500 4.500z" fill="#4aacbf"/><path d="M3 7.500L6.300 9V13L3 11.500zM12 7.500L8.700 9V13L12 11.500z" fill="#4aacbf"/></g></svg><svg style="left:806px;top:191px" width="14" height="16" ><g transform="translate(0.5 0)"><circle cx="6.500" cy="8" r="6.300" fill="url(#chk)"/></g></svg><svg style="left:825px;top:191px" width="15" height="16" ><path d="M7.500 3.500a3.800 3.800 0 0 1 2.300 6.800V12H5.200V10.300A3.800 3.800 0 0 1 7.500 3.500z" fill="#d8d8d8"/><rect x="5.800" y="12.800" width="3.400" height="1.200" fill="#d8d8d8"/><rect x="6.500" y="14.600" width="2" height="1" fill="#d8d8d8"/><path d="M7.500 0V2M2.500 2l1.200 1.200M12.500 2l-1.200 1.200M0.500 7H2.300M12.700 7h1.800" stroke="#d8d8d8" stroke-width="1.100"/></svg><svg style="left:842px;top:191px" width="17" height="16" ><g transform="translate(0.5 0)"><path d="M0.500 11L5 7.500 9 12.500 4 14.500z" fill="#d8d8d8"/><path d="M2 10.500l4.500 4M3.500 9.200l4.500 4" stroke="#444" stroke-width="0.700"/><circle cx="10" cy="7" r="5.500" fill="#4aacbf"/></g></svg><div class="a" style="left:865.0px;top:190px;width:1px;height:18px;background:#777;"></div><div class="a" style="left:864.0px;top:194px;width:3px;height:10px;background:#777;border-radius:1px"></div><svg style="left:874px;top:191px" width="15" height="16" ><g transform="translate(0.5 0)"><circle cx="7" cy="5.500" r="5.300" fill="#d8d8d8"/><path d="M0.500 11.500l13 3.500M1.500 14l4-5M5 15l3.500-5.500M8.500 15.500l3-5" stroke="#4aacbf" stroke-width="1" fill="none"/></g></svg><svg style="left:892px;top:191px" width="16" height="16" ><g transform="translate(0.5 0)"><circle cx="4.500" cy="11" r="4.200" fill="#5e5e5e"/><circle cx="7" cy="8.500" r="4.300" fill="#858585"/><circle cx="10.500" cy="5" r="4.500" fill="#d8d8d8"/></g></svg><svg style="left:913px;top:191px" width="13" height="16" ><path d="M6.500 1.500A6.500 6.500 0 0 0 6.500 14.500" fill="none" stroke="#4aacbf" stroke-width="2"/><path d="M6.500 1.500A6.500 6.500 0 0 1 6.500 14.500" fill="none" stroke="#d8d8d8" stroke-width="2" stroke-dasharray="1.700 1.500"/></svg><div class="a" style="left:929.5px;top:189.5px;width:18px;height:18.5px;background:#3a3a3a;"></div><svg style="left:931px;top:191px" width="16" height="16" ><rect x="1" y="1" width="9" height="9" fill="#3f4b50"/><rect x="5" y="5" width="10" height="10" fill="#48585e"/></svg><div class="a" style="left:952.0px;top:190px;width:1px;height:18px;background:#777;"></div><div class="a" style="left:951.0px;top:194px;width:3px;height:10px;background:#777;border-radius:1px"></div><svg style="left:961px;top:191px" width="16" height="16" ><rect x="0.800" y="1.300" width="7.500" height="7" fill="none" stroke="#4aacbf" stroke-width="1.300" stroke-dasharray="2 1.200"/><path transform="translate(7 5) scale(0.85)" d="M0 0v11.500l2.800-2.300 1.900 4.300 2-0.900-1.900-4.200 3.700-0.300z" fill="#d8d8d8" stroke="#444" stroke-width="0.800"/></svg><div class="a" style="left:982.0px;top:190px;width:1px;height:18px;background:#777;"></div><div class="a" style="left:981.0px;top:194px;width:3px;height:10px;background:#777;border-radius:1px"></div><div class="a" style="left:989.5px;top:190px;width:17px;height:18px;background:#3a3a3a;"></div><svg style="left:991px;top:191px" width="16" height="16" ><g transform="translate(0.5 0)"><rect x="4.500" y="1" width="9.500" height="9" fill="#d8d8d8"/><rect x="0.500" y="5" width="9.500" height="9.500" fill="#d8d8d8" stroke="#3a3a3a" stroke-width="1"/><rect x="5.500" y="6" width="3.500" height="3" fill="#3a3a3a"/></g></svg><div class="a" style="left:1008.5px;top:190px;width:17px;height:18px;background:#3a3a3a;"></div><svg style="left:1010px;top:191px" width="15" height="16" ><path d="M5.500 5V1.700H14.300V10.500H11" fill="none" stroke="#d8d8d8" stroke-width="1.400"/><rect x="0.500" y="5.500" width="10" height="9.500" fill="#d8d8d8"/></svg><div class="a" style="left:1027.5px;top:190px;width:17px;height:18px;background:#3a3a3a;"></div><svg style="left:1029px;top:191px" width="15" height="16" ><rect x="0.700" y="1.200" width="13.600" height="13.600" fill="#3a3a3a" stroke="#d8d8d8" stroke-width="1.300"/><circle cx="5.500" cy="6" r="2" fill="#d8d8d8"/><path d="M5.500 6L11 12" stroke="#d8d8d8" stroke-width="2.400" stroke-linecap="round"/></svg><div class="a" style="left:1050.0px;top:190px;width:1px;height:18px;background:#777;"></div><div class="a" style="left:1049.0px;top:194px;width:3px;height:10px;background:#777;border-radius:1px"></div><svg style="left:1060px;top:192px" width="14" height="14" ><path d="M7 7L7 0.300A6.700 6.700 0 0 1 12.300 3z" fill="#d8d8d8" transform="rotate(8 7 7)"/><path d="M7 7L7 0.300A6.700 6.700 0 0 1 12.300 3z" fill="#d8d8d8" transform="rotate(68 7 7)"/><path d="M7 7L7 0.300A6.700 6.700 0 0 1 12.300 3z" fill="#d8d8d8" transform="rotate(128 7 7)"/><path d="M7 7L7 0.300A6.700 6.700 0 0 1 12.300 3z" fill="#d8d8d8" transform="rotate(188 7 7)"/><path d="M7 7L7 0.300A6.700 6.700 0 0 1 12.300 3z" fill="#d8d8d8" transform="rotate(248 7 7)"/><path d="M7 7L7 0.300A6.700 6.700 0 0 1 12.300 3z" fill="#d8d8d8" transform="rotate(308 7 7)"/><circle cx="7" cy="7" r="2" fill="#444"/></svg><div class="fld" style="left:1078.500px;top:191.500px;width:37.500px;height:14px;border-radius:3px"></div><div class="t" style="left:1083px;top:190.6px;font-size:12px;color:#d8d8d8">0.00</div><svg style="left:1122px;top:191px" width="13" height="16" ><g transform="translate(0.5 0)"><rect x="4" y="1" width="7.500" height="13" fill="#d8d8d8"/><circle cx="4.500" cy="7.500" r="4" fill="#d8d8d8"/><path d="M4.500 3.500A4 4 0 0 1 4.500 11.500z" fill="#444"/></g></svg><div class="fld" style="left:1139.500px;top:191.500px;width:37.500px;height:14px;border-radius:3px"></div><div class="t" style="left:1144px;top:190.6px;font-size:12px;color:#d8d8d8">1.00</div><div class="a" style="left:1180px;top:189.5px;width:18.5px;height:18.5px;background:#5285a6;"></div><svg style="left:1182px;top:191px" width="15" height="15" ><circle cx="7.500" cy="7.500" r="6.500" fill="#4aacbf" stroke="#2d7486" stroke-width="1"/><text x="7.500" y="9.800" font-family="Liberation Sans,sans-serif" font-weight="bold" font-size="6" fill="#2a5560" text-anchor="middle">ON</text></svg><div class="a" style="left:324px;top:210px;width:874px;height:596px;background:#5d5d5d;"></div><svg style="left:0;top:0" width="1495" height="944" viewBox="0 0 1495 944"><path d="M761.2 394.7L438.5 507.9M761.2 394.7L1083.2 507.9M771.4 398.3L447.6 514.3M751.0 398.3L1074.1 514.3M781.8 401.9L457.0 520.8M740.6 401.9L1064.8 520.8M792.4 405.7L466.7 527.6M730.0 405.7L1055.2 527.5M803.3 409.5L476.6 534.5M719.1 409.5L1045.3 534.5M814.4 413.4L486.8 541.7M708.0 413.4L1035.1 541.6M825.7 417.4L497.4 549.0M696.6 417.3L1024.6 548.9M837.3 421.5L508.2 556.6M685.0 421.4L1013.7 556.5M849.2 425.6L519.4 564.4M673.2 425.6L1002.6 564.3M861.3 429.9L531.0 572.5M661.0 429.8L991.1 572.4M873.7 434.3L542.9 580.8M648.6 434.2L979.2 580.7M886.4 438.7L555.2 589.4M635.9 438.7L966.9 589.3M912.7 448.0L581.0 607.5M609.5 447.9L941.2 607.3M926.3 452.8L594.6 616.9M595.9 452.7L927.6 616.8M940.3 457.7L608.7 626.8M581.9 457.6L913.6 626.6M954.6 462.7L623.2 636.9M567.5 462.6L899.1 636.8M969.3 467.8L638.3 647.5M552.8 467.8L884.0 647.3M984.3 473.1L653.9 658.4M537.8 473.1L868.4 658.3M999.7 478.6L670.1 669.7M522.3 478.5L852.2 669.6M1015.5 484.1L687.0 681.4M506.4 484.1L835.4 681.4M1031.8 489.8L704.4 693.7M490.1 489.8L817.9 693.6M1048.5 495.7L722.6 706.3M473.4 495.7L799.8 706.3M1065.6 501.7L741.5 719.6M456.2 501.7L780.9 719.5M1083.2 507.9L761.2 733.3M438.5 507.9L761.2 733.3" stroke="#424242" stroke-width="1" fill="none" shape-rendering="crispEdges"/><path d="M899.4 443.3L567.9 598.3M622.9 443.2L954.3 598.2" stroke="#3e3e3e" stroke-width="2" fill="none" shape-rendering="crispEdges"/></svg><svg style="left:0;top:0" width="1495" height="944" viewBox="0 0 1495 944"><defs><linearGradient id="vcg" x1="0" y1="0" x2="0" y2="1"><stop offset="0" stop-color="#a2a2a2"/><stop offset="1" stop-color="#acacac"/></linearGradient></defs><polygon points="1140.4,236.4 1173.2,248.3 1170.6,286.2 1140.6,304.7 1110.7,286.2 1107.8,248.3" fill="#6a6a6a"/><polygon points="1140.4,237.5 1170.0,248.2 1140.6,258.5 1111.0,248.2" fill="#a8a8a8"/><polygon points="1108.8,250.2 1139.6,261.2 1139.6,302.8 1111.6,285.5" fill="url(#vcg)"/><polygon points="1172.2,250.2 1141.6,261.2 1141.6,302.8 1169.7,285.5" fill="url(#vcg)"/><text font-family="Noto Sans CJK SC,sans-serif" font-size="20" fill="#56616a" fill-opacity="0.88" text-anchor="middle" transform="matrix(0.88 0.31 -0.87 0.32 1140.500 248.000)" x="0" y="7">上</text><text font-family="Noto Sans CJK SC,sans-serif" font-size="20" fill="#56616a" fill-opacity="0.88" text-anchor="middle" transform="matrix(0.93 0.36 0.06 1.02 1125 274)" x="0" y="7">前</text><text font-family="Noto Sans CJK SC,sans-serif" font-size="20" fill="#56616a" fill-opacity="0.88" text-anchor="middle" transform="matrix(0.93 -0.36 -0.06 1.02 1156 274)" x="0" y="7">右</text></svg><svg style="left:0;top:0" width="1495" height="944" viewBox="0 0 1495 944"><path d="M349.500 780.500V768" stroke="#00e000" stroke-width="1.200"/><path d="M349.500 780.500L358 784.500" stroke="#f00000" stroke-width="1.200" stroke-dasharray="2 1"/><path d="M349.500 780.500L341 784.500" stroke="#1010ff" stroke-width="1.200" stroke-dasharray="2 1"/><text x="346.500" y="765" font-family="Liberation Sans,sans-serif" font-size="9.800" font-weight="bold" fill="#00e000">y</text><text x="357.500" y="784.500" font-family="Liberation Sans,sans-serif" font-size="9.800" font-weight="bold" fill="#f00000">x</text><text x="335.500" y="784.500" font-family="Liberation Sans,sans-serif" font-size="9.800" font-weight="bold" fill="#1010ff">z</text></svg><div class="t" style="left:739px;top:784.9px;font-size:10px;color:#f4f4f4;font-weight:bold">persp</div>
<div class="a" style="left:1202px;top:163px;width:2px;height:647px;background:#383838;"></div><div class="a" style="left:1467px;top:163px;width:20px;height:648px;background:#373737;"></div><div class="a" style="left:1467px;top:165px;width:19.500px;height:109.5px;background:#444;border-radius:0 3px 3px 0"></div><div class="a" style="left:1465.800px;top:165px;width:19px;height:109.5px;writing-mode:vertical-rl;text-orientation:sideways;font-size:12px;color:#eee;line-height:19px;text-align:center;white-space:nowrap">通道盒/层编辑器</div><div class="a" style="left:1467px;top:277.5px;width:19.500px;height:81.5px;background:#3a3a3a;border:1px solid #2b2b2b;border-left:none;border-radius:0 3px 3px 0"></div><div class="a" style="left:1465.800px;top:277.5px;width:19px;height:81.5px;writing-mode:vertical-rl;text-orientation:sideways;font-size:12px;color:#9a9a9a;line-height:19px;text-align:center;white-space:nowrap">属性编辑器</div><div class="a" style="left:1467px;top:362px;width:19.500px;height:80.5px;background:#3a3a3a;border:1px solid #2b2b2b;border-left:none;border-radius:0 3px 3px 0"></div><div class="a" style="left:1465.800px;top:362px;width:19px;height:80.5px;writing-mode:vertical-rl;text-orientation:sideways;font-size:12px;color:#9a9a9a;line-height:19px;text-align:center;white-space:nowrap">建模工具包</div><svg style="left:1405px;top:166px" width="15" height="16" ><g transform="translate(0.5 0.5)"><path d="M7 0.500L10 5.500H4z" fill="#6cc24a"/><path d="M0.500 14L1 9 5 12z" fill="#4a7bd8"/><path d="M13.500 14L13 9 9 12z" fill="#e05050"/><path d="M7 5.500V9.500L3.500 11.500M7 9.500L10.500 11.500" stroke="#d8d8d8" stroke-width="1.200" fill="none"/><circle cx="7" cy="9.500" r="1.400" fill="#d8d8d8"/></g></svg><svg style="left:1425px;top:167px" width="15" height="14" ><path d="M7.500 12.500A5.800 5.800 0 1 1 13.300 6.700" fill="none" stroke="#4aacbf" stroke-width="3"/><path d="M13.300 6.700A5.800 5.800 0 0 1 7.500 12.500" fill="none" stroke="#777" stroke-width="3"/><circle cx="7.500" cy="6.800" r="1.600" fill="#4aacbf"/><path d="M7.500 6.800H13" stroke="#4aacbf" stroke-width="1.200"/></svg><svg style="left:1446px;top:166px" width="16" height="16" ><g transform="translate(0.5 0.5)"><path d="M1 1V13.500H13.500" fill="none" stroke="#777" stroke-width="1.200"/><path d="M3 11.500L12 2.500" stroke="#4aacbf" stroke-width="1.500"/><path d="M8.500 1.500H13V6z" fill="#4aacbf"/></g></svg><div class="t" style="left:1216px;top:190.8px;font-size:12px">通道</div><div class="t" style="left:1255px;top:190.8px;font-size:12px">编辑</div><div class="t" style="left:1293.5px;top:190.8px;font-size:12px">对象</div><div class="t" style="left:1333px;top:190.8px;font-size:12px">显示</div><div class="a" style="left:1206px;top:331.300px;width:260px;text-align:center;font-size:12px;line-height:17px;color:#d0d0d0;font-weight:500">选择场景中的对象以查看、编辑和设<br>置通道(属性)上的关键帧</div><svg style="left:1293px;top:487px" width="87" height="3"><rect width="87" height="3" fill="url(#dp)"/></svg><div class="a" style="left:1208px;top:496px;width:256px;height:20px;background:#383838;"></div><div class="a" style="left:1208px;top:496px;width:256px;height:310px;border:1px solid #343434;border-top:none"></div><div class="a" style="left:1209.500px;top:497.500px;width:46px;height:19px;background:#444;border-radius:3px 3px 0 0"></div><div class="a" style="left:1257.500px;top:498.500px;width:45.500px;height:17.500px;background:#3a3a3a;border:1px solid #2b2b2b;border-bottom:none;border-radius:3px 3px 0 0"></div><div class="t" style="left:1220px;top:500.0px;font-size:12px;color:#eee">显示</div><div class="t" style="left:1268px;top:500.0px;font-size:12px;color:#9a9a9a">动画</div><div class="t" style="left:1218.5px;top:521.0px;font-size:12px">层</div><div class="t" style="left:1246px;top:521.0px;font-size:12px">选项</div><div class="t" style="left:1285.5px;top:521.0px;font-size:12px">帮助</div><svg style="left:0;top:0" width="1495" height="600" viewBox="0 0 1495 600"><path d="M1366.2 553L1373 548.6 1379.8 553 1373 557.4z" fill="#c6c6c6"/><path d="M1374 552.500L1377.700 548.200 1381.400 552.500H1379.500V556.300H1375.900V552.500z" fill="#4aacbf" stroke="#444" stroke-width="0.700"/></svg><svg style="left:0;top:0" width="1495" height="600" viewBox="0 0 1495 600"><path d="M1388.9 552.6L1395.7 548.2 1402.5 552.6 1395.7 557.0z" fill="#c6c6c6"/><path d="M1397 552.600L1400.600 556.800 1404.200 552.600H1402.400V548.800H1398.800V552.600z" fill="#4aacbf" stroke="#444" stroke-width="0.700"/></svg><svg style="left:0;top:0" width="1495" height="600" viewBox="0 0 1495 600"><path d="M1416.2 552.6L1423 548.2 1429.8 552.6 1423 557.0z" fill="#c6c6c6"/><path d="M1428 545.300V552.700M1424.300 549H1431.700" stroke="#444" stroke-width="3.400"/><path d="M1428 545.800V552.200M1424.800 549H1431.200" stroke="#4aacbf" stroke-width="2.100"/></svg><svg style="left:0;top:0" width="1495" height="600" viewBox="0 0 1495 600"><path d="M1439.9 552.8L1446.7 548.4 1453.5 552.8 1446.7 557.1999999999999z" fill="#c6c6c6"/><circle cx="1450" cy="549" r="3.900" fill="#444"/><circle cx="1450" cy="549" r="3.200" fill="#4aacbf"/></svg><div class="a" style="left:1212px;top:567px;width:247px;height:234px;background:#2b2b2b;"></div><div class="a" style="left:1212.5px;top:790.5px;width:246.5px;height:10.5px;background:#373737;"></div><svg style="left:1215px;top:791px" width="5" height="10" ><path d="M5 0v9.5l-5 -4.75z" fill="#c0c0c0"/></svg><svg style="left:1450px;top:791px" width="5" height="10" ><path d="M0 0v9.5l5 -4.75z" fill="#c0c0c0"/></svg><div class="a" style="left:1225px;top:791px;width:154px;height:9.5px;background:#5d5d5d;border-radius:5px"></div>
<div class="a" style="left:8px;top:810px;width:1479px;height:2px;background:#3a3a3a;"></div><div class="a" style="left:24px;top:820px;width:1166px;height:32px;background:#2b2b2b;"></div><div class="a" style="left:31.85px;top:852px;width:1151.5px;height:2px;background:#666;"></div><div class="a" style="left:31.85px;top:812px;width:9.59px;height:48px;background:rgba(255,255,255,0.075);"></div><div class="a" style="left:31.85px;top:852px;width:9.59px;height:2px;background:#747474;"></div><div class="a" style="left:70px;top:812px;width:1px;height:8px;background:#222;"></div><div class="a" style="left:70px;top:852px;width:1px;height:8px;background:#222;"></div><div class="a" style="left:70px;top:836px;width:1px;height:15.5px;background:#b8b8b8;"></div><div class="t" style="left:77.5px;top:821.300px;font-size:12.500px;color:#a8a8a8;max-width:1112.5px;overflow:hidden">5</div><div class="a" style="left:118px;top:812px;width:1px;height:8px;background:#222;"></div><div class="a" style="left:118px;top:852px;width:1px;height:8px;background:#222;"></div><div class="a" style="left:118px;top:836px;width:1px;height:15.5px;background:#b8b8b8;"></div><div class="t" style="left:125.5px;top:821.300px;font-size:12.500px;color:#a8a8a8;max-width:1064.5px;overflow:hidden">10</div><div class="a" style="left:166px;top:812px;width:1px;height:8px;background:#222;"></div><div class="a" style="left:166px;top:852px;width:1px;height:8px;background:#222;"></div><div class="a" style="left:166px;top:836px;width:1px;height:15.5px;background:#b8b8b8;"></div><div class="t" style="left:173.4px;top:821.300px;font-size:12.500px;color:#a8a8a8;max-width:1016.6px;overflow:hidden">15</div><div class="a" style="left:214px;top:812px;width:1px;height:8px;background:#222;"></div><div class="a" style="left:214px;top:852px;width:1px;height:8px;background:#222;"></div><div class="a" style="left:214px;top:836px;width:1px;height:15.5px;background:#b8b8b8;"></div><div class="t" style="left:221.4px;top:821.300px;font-size:12.500px;color:#a8a8a8;max-width:968.6px;overflow:hidden">20</div><div class="a" style="left:262px;top:812px;width:1px;height:8px;background:#222;"></div><div class="a" style="left:262px;top:852px;width:1px;height:8px;background:#222;"></div><div class="a" style="left:262px;top:836px;width:1px;height:15.5px;background:#b8b8b8;"></div><div class="t" style="left:269.3px;top:821.300px;font-size:12.500px;color:#a8a8a8;max-width:920.7px;overflow:hidden">25</div><div class="a" style="left:309px;top:812px;width:1px;height:8px;background:#222;"></div><div class="a" style="left:309px;top:852px;width:1px;height:8px;background:#222;"></div><div class="a" style="left:309px;top:836px;width:1px;height:15.5px;background:#b8b8b8;"></div><div class="t" style="left:317.3px;top:821.300px;font-size:12.500px;color:#a8a8a8;max-width:872.7px;overflow:hidden">30</div><div class="a" style="left:357px;top:812px;width:1px;height:8px;background:#222;"></div><div class="a" style="left:357px;top:852px;width:1px;height:8px;background:#222;"></div><div class="a" style="left:357px;top:836px;width:1px;height:15.5px;background:#b8b8b8;"></div><div class="t" style="left:365.2px;top:821.300px;font-size:12.500px;color:#a8a8a8;max-width:824.8px;overflow:hidden">35</div><div class="a" style="left:405px;top:812px;width:1px;height:8px;background:#222;"></div><div class="a" style="left:405px;top:852px;width:1px;height:8px;background:#222;"></div><div class="a" style="left:405px;top:836px;width:1px;height:15.5px;background:#b8b8b8;"></div><div class="t" style="left:413.2px;top:821.300px;font-size:12.500px;color:#a8a8a8;max-width:776.8px;overflow:hidden">40</div><div class="a" style="left:453px;top:812px;width:1px;height:8px;background:#222;"></div><div class="a" style="left:453px;top:852px;width:1px;height:8px;background:#222;"></div><div class="a" style="left:453px;top:836px;width:1px;height:15.5px;background:#b8b8b8;"></div><div class="t" style="left:461.1px;top:821.300px;font-size:12.500px;color:#a8a8a8;max-width:728.9px;overflow:hidden">45</div><div class="a" style="left:501px;top:812px;width:1px;height:8px;background:#222;"></div><div class="a" style="left:501px;top:852px;width:1px;height:8px;background:#222;"></div><div class="a" style="left:501px;top:836px;width:1px;height:15.5px;background:#b8b8b8;"></div><div class="t" style="left:509.1px;top:821.300px;font-size:12.500px;color:#a8a8a8;max-width:680.9px;overflow:hidden">50</div><div class="a" style="left:549px;top:812px;width:1px;height:8px;background:#222;"></div><div class="a" style="left:549px;top:852px;width:1px;height:8px;background:#222;"></div><div class="a" style="left:549px;top:836px;width:1px;height:15.5px;background:#b8b8b8;"></div><div class="t" style="left:557.0px;top:821.300px;font-size:12.500px;color:#a8a8a8;max-width:633.0px;overflow:hidden">55</div><div class="a" style="left:597px;top:812px;width:1px;height:8px;background:#222;"></div><div class="a" style="left:597px;top:852px;width:1px;height:8px;background:#222;"></div><div class="a" style="left:597px;top:836px;width:1px;height:15.5px;background:#b8b8b8;"></div><div class="t" style="left:605.0px;top:821.300px;font-size:12.500px;color:#a8a8a8;max-width:585.0px;overflow:hidden">60</div><div class="a" style="left:645px;top:812px;width:1px;height:8px;background:#222;"></div><div class="a" style="left:645px;top:852px;width:1px;height:8px;background:#222;"></div><div class="a" style="left:645px;top:836px;width:1px;height:15.5px;background:#b8b8b8;"></div><div class="t" style="left:652.9px;top:821.300px;font-size:12.500px;color:#a8a8a8;max-width:537.1px;overflow:hidden">65</div><div class="a" style="left:693px;top:812px;width:1px;height:8px;background:#222;"></div><div class="a" style="left:693px;top:852px;width:1px;height:8px;background:#222;"></div><div class="a" style="left:693px;top:836px;width:1px;height:15.5px;background:#b8b8b8;"></div><div class="t" style="left:700.9px;top:821.300px;font-size:12.500px;color:#a8a8a8;max-width:489.1px;overflow:hidden">70</div><div class="a" style="left:741px;top:812px;width:1px;height:8px;background:#222;"></div><div class="a" style="left:741px;top:852px;width:1px;height:8px;background:#222;"></div><div class="a" style="left:741px;top:836px;width:1px;height:15.5px;background:#b8b8b8;"></div><div class="t" style="left:748.8px;top:821.300px;font-size:12.500px;color:#a8a8a8;max-width:441.2px;overflow:hidden">75</div><div class="a" style="left:789px;top:812px;width:1px;height:8px;background:#222;"></div><div class="a" style="left:789px;top:852px;width:1px;height:8px;background:#222;"></div><div class="a" style="left:789px;top:836px;width:1px;height:15.5px;background:#b8b8b8;"></div><div class="t" style="left:796.8px;top:821.300px;font-size:12.500px;color:#a8a8a8;max-width:393.2px;overflow:hidden">80</div><div class="a" style="left:837px;top:812px;width:1px;height:8px;background:#222;"></div><div class="a" style="left:837px;top:852px;width:1px;height:8px;background:#222;"></div><div class="a" style="left:837px;top:836px;width:1px;height:15.5px;background:#b8b8b8;"></div><div class="t" style="left:844.7px;top:821.300px;font-size:12.500px;color:#a8a8a8;max-width:345.3px;overflow:hidden">85</div><div class="a" style="left:885px;top:812px;width:1px;height:8px;background:#222;"></div><div class="a" style="left:885px;top:852px;width:1px;height:8px;background:#222;"></div><div class="a" style="left:885px;top:836px;width:1px;height:15.5px;background:#b8b8b8;"></div><div class="t" style="left:892.7px;top:821.300px;font-size:12.500px;color:#a8a8a8;max-width:297.3px;overflow:hidden">90</div><div class="a" style="left:933px;top:812px;width:1px;height:8px;background:#222;"></div><div class="a" style="left:933px;top:852px;width:1px;height:8px;background:#222;"></div><div class="a" style="left:933px;top:836px;width:1px;height:15.5px;background:#b8b8b8;"></div><div class="t" style="left:940.6px;top:821.300px;font-size:12.500px;color:#a8a8a8;max-width:249.4px;overflow:hidden">95</div><div class="a" style="left:981px;top:812px;width:1px;height:8px;background:#222;"></div><div class="a" style="left:981px;top:852px;width:1px;height:8px;background:#222;"></div><div class="a" style="left:981px;top:836px;width:1px;height:15.5px;background:#b8b8b8;"></div><div class="t" style="left:988.6px;top:821.300px;font-size:12.500px;color:#a8a8a8;max-width:201.4px;overflow:hidden">100</div><div class="a" style="left:1029px;top:812px;width:1px;height:8px;background:#222;"></div><div class="a" style="left:1029px;top:852px;width:1px;height:8px;background:#222;"></div><div class="a" style="left:1029px;top:836px;width:1px;height:15.5px;background:#b8b8b8;"></div><div class="t" style="left:1036.5px;top:821.300px;font-size:12.500px;color:#a8a8a8;max-width:153.5px;overflow:hidden">105</div><div class="a" style="left:1077px;top:812px;width:1px;height:8px;background:#222;"></div><div class="a" style="left:1077px;top:852px;width:1px;height:8px;background:#222;"></div><div class="a" style="left:1077px;top:836px;width:1px;height:15.5px;background:#b8b8b8;"></div><div class="t" style="left:1084.5px;top:821.300px;font-size:12.500px;color:#a8a8a8;max-width:105.5px;overflow:hidden">110</div><div class="a" style="left:1125px;top:812px;width:1px;height:8px;background:#222;"></div><div class="a" style="left:1125px;top:852px;width:1px;height:8px;background:#222;"></div><div class="a" style="left:1125px;top:836px;width:1px;height:15.5px;background:#b8b8b8;"></div><div class="t" style="left:1132.4px;top:821.300px;font-size:12.500px;color:#a8a8a8;max-width:57.6px;overflow:hidden">115</div><div class="a" style="left:1173px;top:812px;width:1px;height:8px;background:#222;"></div><div class="a" style="left:1173px;top:852px;width:1px;height:8px;background:#222;"></div><div class="a" style="left:1173px;top:836px;width:1px;height:15.5px;background:#b8b8b8;"></div><div class="t" style="left:1180.4px;top:821.300px;font-size:12.500px;color:#a8a8a8;max-width:9.6px;overflow:hidden">120</div><div class="a" style="left:37px;top:835px;width:9px;height:14px;background:#2b2b2b;border-radius:2px"></div><div class="t" style="left:39px;top:834.3px;font-size:12.500px;color:#f0f0f0">1</div><svg style="left:11px;top:816px" width="6" height="42"><rect width="6" height="42" fill="url(#dp)"/></svg><div class="fld" style="left:1199px;top:826px;width:56px;height:20px;border-radius:3px"></div><div class="t" style="left:1205px;top:829.3px;font-size:12.500px;color:#b8b8b8">1</div><svg style="left:0;top:0" width="1495" height="944" viewBox="0 0 1495 944"><rect x="1265.7" y="829.8" width="1.9" height="11.4" fill="#c4c4c4"/><path d="M1268.4 835.5L1273.9 830.2V840.8z" fill="#c4c4c4"/><path d="M1275.4 835.5L1280.9 830.2V840.8z" fill="#c4c4c4"/><rect x="1295.9" y="829.8" width="1.9" height="11.4" fill="#c4c4c4"/><path d="M1298.7 835.5L1306.9 829.8V841.2z" fill="#c4c4c4"/><path d="M1324.3000000000002 827.1V843.6" stroke="#999" stroke-width="0.800"/><rect x="1322.9" y="829.7" width="2.8" height="11.600" rx="0.800" fill="#e0843a"/><path d="M1327 835.5L1335.2 829.8V841.2z" fill="#c4c4c4"/><path d="M1351.2 835.5L1363.1 827.9V843.1z" fill="#c4c4c4"/><path d="M1392.1 835.5L1380 827.9V843.1z" fill="#c4c4c4"/><path d="M1416.1 835.5L1407.8 829.8V841.2z" fill="#c4c4c4"/><path d="M1418.45 827.1V843.6" stroke="#999" stroke-width="0.800"/><rect x="1416.9" y="829.7" width="3.1" height="11.600" rx="0.800" fill="#e0843a"/><path d="M1444.4 835.5L1436.1 829.8V841.2z" fill="#c4c4c4"/><rect x="1444.9" y="829.8" width="1.9" height="11.4" fill="#c4c4c4"/><path d="M1468 835.5L1462.2 830.2V840.8z" fill="#c4c4c4"/><path d="M1474.7 835.5L1469.1 830.2V840.8z" fill="#c4c4c4"/><rect x="1475" y="829.8" width="1.9" height="11.4" fill="#c4c4c4"/></svg><div class="a" style="left:8px;top:860px;width:1479px;height:2px;background:#3a3a3a;"></div>
<svg style="left:11px;top:866px" width="6" height="30"><rect width="6" height="30" fill="url(#dp)"/></svg><div class="fld" style="left:25px;top:870px;width:55.500px;height:20px;border-radius:3px"></div><div class="t" style="left:30.5px;top:873.3px;font-size:12.500px;color:#b8b8b8">1</div><div class="fld" style="left:90px;top:870px;width:628.500px;height:20px;border-radius:3px"></div><div class="a" style="left:92px;top:872px;width:386px;height:16px;background:#454545;"></div><div class="a" style="left:92px;top:872px;width:8px;height:16px;background:#9d9d9d;border:1px solid #a8a8a8"></div><div class="a" style="left:470px;top:872px;width:8px;height:16px;background:#9d9d9d;border:1px solid #a8a8a8"></div><div class="t" style="left:108px;top:873.3px;font-size:12.500px;color:#b8b8b8">1</div><div class="t" style="left:441px;top:873.3px;font-size:12.500px;color:#b8b8b8">120</div><svg style="left:283px;top:875px" width="6" height="12"><rect width="6" height="12" fill="url(#dp)"/></svg><div class="fld" style="left:728.500px;top:870px;width:55.500px;height:20px;border-radius:3px"></div><div class="t" style="left:733.5px;top:873.3px;font-size:12.500px;color:#b8b8b8">200</div><div class="a" style="left:805.0px;top:869px;width:1px;height:21px;background:#777;"></div><div class="a" style="left:804.0px;top:874px;width:3px;height:11px;background:#777;border-radius:1px"></div><svg style="left:832px;top:869px" width="15" height="20" ><path d="M1 2h8.500v16.500L5.250 14 1 18.500z" fill="#e8743a"/><path d="M7.500 5.500h7M11 2v7" stroke="#444" stroke-width="3.200"/><path d="M7.500 5.500h7M11 2v7" stroke="#e8e8e8" stroke-width="1.600"/></svg><div class="a" style="left:868.5px;top:869px;width:1px;height:21px;background:#777;"></div><div class="a" style="left:867.5px;top:874px;width:3px;height:11px;background:#777;border-radius:1px"></div><svg style="left:895px;top:875px" width="9" height="6" ><path d="M0.500 0.500h8l-4 4.500z" fill="none" stroke="#999" stroke-width="1"/></svg><div class="a" style="left:912px;top:869px;width:101px;height:21.500px;background:#404040;border:1px solid #555;border-radius:3px"></div><div class="t" style="left:916.5px;top:872.8px;font-size:12px;color:#d0d0d0">无角色集</div><svg style="left:1027px;top:875px" width="9" height="6" ><path d="M0.500 0.500h8l-4 4.500z" fill="none" stroke="#999" stroke-width="1"/></svg><div class="a" style="left:1043.500px;top:869px;width:101px;height:21.500px;background:#404040;border:1px solid #555;border-radius:3px"></div><div class="t" style="left:1048.5px;top:872.8px;font-size:12px;color:#d0d0d0">无动画层</div><div class="a" style="left:1165.5px;top:869px;width:1px;height:21px;background:#777;"></div><div class="a" style="left:1164.5px;top:874px;width:3px;height:11px;background:#777;border-radius:1px"></div><div class="cb" style="left:1189px;top:868px;width:104px;height:22px"></div><div class="a" style="left:1272.5px;top:868px;width:1px;height:22px;background:#4e4e4e;"></div><div class="t" style="left:1193px;top:872.3px;font-size:12.500px;color:#d0d0d0">24 fps</div><svg style="left:1278px;top:877px" width="10" height="5" ><path d="M0 0h9.5l-4.75 5z" fill="#c8c8c8"/></svg><svg style="left:0;top:0" width="1495" height="944" viewBox="0 0 1495 944"><path d="M1313.500 882.500H1313A3.500 3.500 0 0 1 1313 875.500H1319.500M1320.500 875.500H1321A3.500 3.500 0 0 1 1321 882.500H1314.500" fill="none" stroke="#c6c6c6" stroke-width="1.900"/><path d="M1318.500 872.300L1323.300 875.500 1318.500 878.700zM1315.500 879.300L1310.700 882.500 1315.500 885.700z" fill="#c6c6c6"/><rect x="1337" y="868" width="23" height="23" fill="#5285a6"/><rect x="1340" y="872.900" width="16" height="12.600" fill="#3c3c3c" stroke="#e8843a" stroke-width="1.400"/><path d="M1341.500 874.800H1355M1341.500 883.600H1355" stroke="#e8843a" stroke-width="1.300" stroke-dasharray="1.800 1.300"/><rect x="1341.800" y="876.700" width="3.400" height="4.900" fill="#dcdcdc"/><rect x="1346.400" y="876.700" width="3.400" height="4.900" fill="#dcdcdc"/><rect x="1351" y="876.700" width="3.400" height="4.900" fill="#dcdcdc"/><path d="M1351.200 869.300L1357.600 873.300 1351.200 877.500z" fill="#d4d4d4" stroke="#444" stroke-width="0.600"/><path d="M1404 875.800H1407.500L1412.500 871.800V886.200L1407.500 882.200H1404z" fill="#c6c6c6"/><path d="M1414.500 876.500a3.500 3.500 0 0 1 0 5M1416.500 874.300a6.300 6.300 0 0 1 0 9.400M1418.600 872.500a8.800 8.800 0 0 1 0 13" fill="none" stroke="#c6c6c6" stroke-width="1.100"/><path d="M1436.300 875.500A7 7 0 0 1 1448.300 876.800M1447.200 883.200A7 7 0 0 1 1435.200 881.800" fill="none" stroke="#c6c6c6" stroke-width="1.100"/><path d="M1434.300 873.200L1437.600 876.800 1433.800 877.800zM1449.200 885.400L1445.900 881.800 1449.700 880.800z" fill="#c6c6c6"/><rect x="1440.100" y="875.600" width="2.400" height="7.400" fill="#e8843a"/><path d="M1437 879.300H1439.200M1443.400 879.300H1445.600" stroke="#e8843a" stroke-width="1.300"/><circle cx="1465.2" cy="875.3" r="4.10" fill="#444"/><rect x="1464.30" y="872.00" width="1.800" height="6.60" fill="#c6c6c6" transform="rotate(0.0 1465.2 875.3)"/><rect x="1464.30" y="872.00" width="1.800" height="6.60" fill="#c6c6c6" transform="rotate(22.5 1465.2 875.3)"/><rect x="1464.30" y="872.00" width="1.800" height="6.60" fill="#c6c6c6" transform="rotate(45.0 1465.2 875.3)"/><rect x="1464.30" y="872.00" width="1.800" height="6.60" fill="#c6c6c6" transform="rotate(67.5 1465.2 875.3)"/><rect x="1464.30" y="872.00" width="1.800" height="6.60" fill="#c6c6c6" transform="rotate(0.0 1465.2 875.3)"/><rect x="1464.30" y="872.00" width="1.800" height="6.60" fill="#c6c6c6" transform="rotate(45.0 1465.2 875.3)"/><rect x="1464.30" y="872.00" width="1.800" height="6.60" fill="#c6c6c6" transform="rotate(90.0 1465.2 875.3)"/><rect x="1464.30" y="872.00" width="1.800" height="6.60" fill="#c6c6c6" transform="rotate(135.0 1465.2 875.3)"/><circle cx="1465.2" cy="875.3" r="2.44" fill="#c6c6c6"/><circle cx="1465.2" cy="875.3" r="1.32" fill="#444"/><circle cx="1474.500" cy="875" r="1.900" fill="#e8843a"/><path d="M1473 878L1469.500 878.700 1468 881.300M1473 878L1471.800 882.200 1474.800 884.200 1474.300 887.600M1471.800 882.200L1469.700 885.200 1466.500 885.600M1473.500 878.400L1475.800 880.600 1478.300 880" fill="none" stroke="#e8843a" stroke-width="1.700" stroke-linecap="round" stroke-linejoin="round"/></svg><div class="a" style="left:1380.0px;top:869px;width:1px;height:21px;background:#777;"></div><div class="a" style="left:1379.0px;top:874px;width:3px;height:11px;background:#777;border-radius:1px"></div><div class="a" style="left:8px;top:896.5px;width:1479px;height:2.5px;background:#3a3a3a;"></div>
<svg style="left:11px;top:904px" width="6" height="30"><rect width="6" height="30" fill="url(#dp)"/></svg><div class="a" style="left:8px;top:935px;width:1479px;height:1px;background:#3a3a3a;"></div><svg style="left:23px;top:909px" width="18" height="18" ><g transform="translate(0.7 0.7)"><circle cx="8.250" cy="8.250" r="8.250" fill="#8a8a8a"/><text x="8.250" y="13.400" font-family="Liberation Sans,sans-serif" font-weight="bold" font-size="14.500" fill="#3c3c3c" text-anchor="middle">?</text></g></svg><div class="a" style="left:635px;top:900px;width:2px;height:36px;background:#3a3a3a;"></div><svg style="left:640px;top:904px" width="6" height="30"><rect width="6" height="30" fill="url(#dp)"/></svg><div class="t" style="left:651px;top:910.3px;font-size:12.500px;color:#d8d8d8">MEL</div><div class="fld" style="left:682.500px;top:908px;width:189.300px;height:20px;border-radius:3px"></div><div class="fld" style="left:877px;top:908px;width:573px;height:20px;border-radius:3px"></div><svg style="left:874px;top:912px" width="3" height="12"><rect width="3" height="12" fill="url(#dp)"/></svg><div class="t" style="left:882px;top:911.3px;font-size:12px;color:#d0d0d0;letter-spacing:0.3px">// 结果: 无标题</div><svg style="left:1459px;top:908px" width="20" height="20" ><g transform="translate(0.5 0.5)"><rect x="0" y="0" width="19" height="19" fill="#c8c8c8"/><rect x="0" y="0" width="19" height="3" fill="#e4e4e4"/><path d="M1 1.500h5" stroke="#444" stroke-width="1" stroke-dasharray="1 0.800"/><path d="M0 3.500h19" stroke="#444" stroke-width="0.800"/><text x="9.500" y="15" font-family="Liberation Mono,monospace" font-weight="bold" font-size="10" fill="#333" text-anchor="middle">{;}</text></g></svg>
</div></div>
</body></html>
